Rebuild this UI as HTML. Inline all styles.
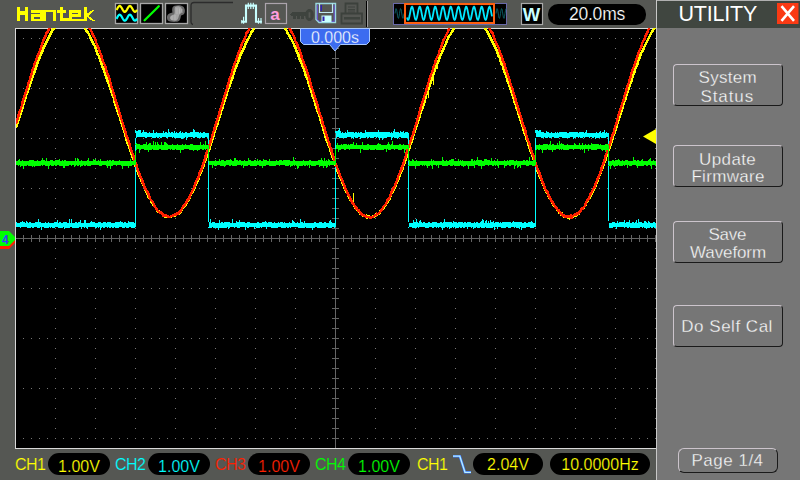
<!DOCTYPE html>
<html><head><meta charset="utf-8"><style>
html,body{margin:0;padding:0}
body{width:800px;height:480px;overflow:hidden;position:relative;background:#555753;font-family:"Liberation Sans",sans-serif}
.a{position:absolute;white-space:nowrap}
.pill{position:absolute;background:#000;border-radius:11px}
.btn{position:absolute;left:673px;width:108px;border-radius:4px;border-top:1px solid #ccc4cc;border-left:1px solid #ccc4cc;border-right:1px solid #1a1a1a;border-bottom:1px solid #1a1a1a}
.bt{position:absolute;color:#fafafa;font-size:17px;line-height:20px;white-space:pre;-webkit-text-stroke:0.3px #767676}
</style></head><body>
<svg width="800" height="480" style="position:absolute;left:0;top:0">
<defs><clipPath id="sc"><rect x="16" y="28" width="640" height="420"/></clipPath></defs>
<rect x="15" y="28" width="641" height="421" fill="#d8d8d8"/>
<rect x="16" y="29" width="640" height="419" fill="#000"/>
<rect x="656" y="0" width="1" height="480" fill="#c8c8c8"/>
<g shape-rendering="crispEdges">
<path d="M23 38h1v1h-1zM31 38h1v1h-1zM39 38h1v1h-1zM47 38h1v1h-1zM55 38h1v1h-1zM63 38h1v1h-1zM71 38h1v1h-1zM79 38h1v1h-1zM87 38h1v1h-1zM95 38h1v1h-1zM103 38h1v1h-1zM111 38h1v1h-1zM119 38h1v1h-1zM127 38h1v1h-1zM135 38h1v1h-1zM143 38h1v1h-1zM151 38h1v1h-1zM159 38h1v1h-1zM167 38h1v1h-1zM175 38h1v1h-1zM183 38h1v1h-1zM191 38h1v1h-1zM199 38h1v1h-1zM207 38h1v1h-1zM215 38h1v1h-1zM223 38h1v1h-1zM231 38h1v1h-1zM239 38h1v1h-1zM247 38h1v1h-1zM255 38h1v1h-1zM263 38h1v1h-1zM271 38h1v1h-1zM279 38h1v1h-1zM287 38h1v1h-1zM295 38h1v1h-1zM303 38h1v1h-1zM311 38h1v1h-1zM319 38h1v1h-1zM327 38h1v1h-1zM335 38h1v1h-1zM343 38h1v1h-1zM351 38h1v1h-1zM359 38h1v1h-1zM367 38h1v1h-1zM375 38h1v1h-1zM383 38h1v1h-1zM391 38h1v1h-1zM399 38h1v1h-1zM407 38h1v1h-1zM415 38h1v1h-1zM423 38h1v1h-1zM431 38h1v1h-1zM439 38h1v1h-1zM447 38h1v1h-1zM455 38h1v1h-1zM463 38h1v1h-1zM471 38h1v1h-1zM479 38h1v1h-1zM487 38h1v1h-1zM495 38h1v1h-1zM503 38h1v1h-1zM511 38h1v1h-1zM519 38h1v1h-1zM527 38h1v1h-1zM535 38h1v1h-1zM543 38h1v1h-1zM551 38h1v1h-1zM559 38h1v1h-1zM567 38h1v1h-1zM575 38h1v1h-1zM583 38h1v1h-1zM591 38h1v1h-1zM599 38h1v1h-1zM607 38h1v1h-1zM615 38h1v1h-1zM623 38h1v1h-1zM631 38h1v1h-1zM639 38h1v1h-1zM647 38h1v1h-1zM655 38h1v1h-1zM23 88h1v1h-1zM31 88h1v1h-1zM39 88h1v1h-1zM47 88h1v1h-1zM55 88h1v1h-1zM63 88h1v1h-1zM71 88h1v1h-1zM79 88h1v1h-1zM87 88h1v1h-1zM95 88h1v1h-1zM103 88h1v1h-1zM111 88h1v1h-1zM119 88h1v1h-1zM127 88h1v1h-1zM135 88h1v1h-1zM143 88h1v1h-1zM151 88h1v1h-1zM159 88h1v1h-1zM167 88h1v1h-1zM175 88h1v1h-1zM183 88h1v1h-1zM191 88h1v1h-1zM199 88h1v1h-1zM207 88h1v1h-1zM215 88h1v1h-1zM223 88h1v1h-1zM231 88h1v1h-1zM239 88h1v1h-1zM247 88h1v1h-1zM255 88h1v1h-1zM263 88h1v1h-1zM271 88h1v1h-1zM279 88h1v1h-1zM287 88h1v1h-1zM295 88h1v1h-1zM303 88h1v1h-1zM311 88h1v1h-1zM319 88h1v1h-1zM327 88h1v1h-1zM335 88h1v1h-1zM343 88h1v1h-1zM351 88h1v1h-1zM359 88h1v1h-1zM367 88h1v1h-1zM375 88h1v1h-1zM383 88h1v1h-1zM391 88h1v1h-1zM399 88h1v1h-1zM407 88h1v1h-1zM415 88h1v1h-1zM423 88h1v1h-1zM431 88h1v1h-1zM439 88h1v1h-1zM447 88h1v1h-1zM455 88h1v1h-1zM463 88h1v1h-1zM471 88h1v1h-1zM479 88h1v1h-1zM487 88h1v1h-1zM495 88h1v1h-1zM503 88h1v1h-1zM511 88h1v1h-1zM519 88h1v1h-1zM527 88h1v1h-1zM535 88h1v1h-1zM543 88h1v1h-1zM551 88h1v1h-1zM559 88h1v1h-1zM567 88h1v1h-1zM575 88h1v1h-1zM583 88h1v1h-1zM591 88h1v1h-1zM599 88h1v1h-1zM607 88h1v1h-1zM615 88h1v1h-1zM623 88h1v1h-1zM631 88h1v1h-1zM639 88h1v1h-1zM647 88h1v1h-1zM655 88h1v1h-1zM23 138h1v1h-1zM31 138h1v1h-1zM39 138h1v1h-1zM47 138h1v1h-1zM55 138h1v1h-1zM63 138h1v1h-1zM71 138h1v1h-1zM79 138h1v1h-1zM87 138h1v1h-1zM95 138h1v1h-1zM103 138h1v1h-1zM111 138h1v1h-1zM119 138h1v1h-1zM127 138h1v1h-1zM135 138h1v1h-1zM143 138h1v1h-1zM151 138h1v1h-1zM159 138h1v1h-1zM167 138h1v1h-1zM175 138h1v1h-1zM183 138h1v1h-1zM191 138h1v1h-1zM199 138h1v1h-1zM207 138h1v1h-1zM215 138h1v1h-1zM223 138h1v1h-1zM231 138h1v1h-1zM239 138h1v1h-1zM247 138h1v1h-1zM255 138h1v1h-1zM263 138h1v1h-1zM271 138h1v1h-1zM279 138h1v1h-1zM287 138h1v1h-1zM295 138h1v1h-1zM303 138h1v1h-1zM311 138h1v1h-1zM319 138h1v1h-1zM327 138h1v1h-1zM335 138h1v1h-1zM343 138h1v1h-1zM351 138h1v1h-1zM359 138h1v1h-1zM367 138h1v1h-1zM375 138h1v1h-1zM383 138h1v1h-1zM391 138h1v1h-1zM399 138h1v1h-1zM407 138h1v1h-1zM415 138h1v1h-1zM423 138h1v1h-1zM431 138h1v1h-1zM439 138h1v1h-1zM447 138h1v1h-1zM455 138h1v1h-1zM463 138h1v1h-1zM471 138h1v1h-1zM479 138h1v1h-1zM487 138h1v1h-1zM495 138h1v1h-1zM503 138h1v1h-1zM511 138h1v1h-1zM519 138h1v1h-1zM527 138h1v1h-1zM535 138h1v1h-1zM543 138h1v1h-1zM551 138h1v1h-1zM559 138h1v1h-1zM567 138h1v1h-1zM575 138h1v1h-1zM583 138h1v1h-1zM591 138h1v1h-1zM599 138h1v1h-1zM607 138h1v1h-1zM615 138h1v1h-1zM623 138h1v1h-1zM631 138h1v1h-1zM639 138h1v1h-1zM647 138h1v1h-1zM655 138h1v1h-1zM23 188h1v1h-1zM31 188h1v1h-1zM39 188h1v1h-1zM47 188h1v1h-1zM55 188h1v1h-1zM63 188h1v1h-1zM71 188h1v1h-1zM79 188h1v1h-1zM87 188h1v1h-1zM95 188h1v1h-1zM103 188h1v1h-1zM111 188h1v1h-1zM119 188h1v1h-1zM127 188h1v1h-1zM135 188h1v1h-1zM143 188h1v1h-1zM151 188h1v1h-1zM159 188h1v1h-1zM167 188h1v1h-1zM175 188h1v1h-1zM183 188h1v1h-1zM191 188h1v1h-1zM199 188h1v1h-1zM207 188h1v1h-1zM215 188h1v1h-1zM223 188h1v1h-1zM231 188h1v1h-1zM239 188h1v1h-1zM247 188h1v1h-1zM255 188h1v1h-1zM263 188h1v1h-1zM271 188h1v1h-1zM279 188h1v1h-1zM287 188h1v1h-1zM295 188h1v1h-1zM303 188h1v1h-1zM311 188h1v1h-1zM319 188h1v1h-1zM327 188h1v1h-1zM335 188h1v1h-1zM343 188h1v1h-1zM351 188h1v1h-1zM359 188h1v1h-1zM367 188h1v1h-1zM375 188h1v1h-1zM383 188h1v1h-1zM391 188h1v1h-1zM399 188h1v1h-1zM407 188h1v1h-1zM415 188h1v1h-1zM423 188h1v1h-1zM431 188h1v1h-1zM439 188h1v1h-1zM447 188h1v1h-1zM455 188h1v1h-1zM463 188h1v1h-1zM471 188h1v1h-1zM479 188h1v1h-1zM487 188h1v1h-1zM495 188h1v1h-1zM503 188h1v1h-1zM511 188h1v1h-1zM519 188h1v1h-1zM527 188h1v1h-1zM535 188h1v1h-1zM543 188h1v1h-1zM551 188h1v1h-1zM559 188h1v1h-1zM567 188h1v1h-1zM575 188h1v1h-1zM583 188h1v1h-1zM591 188h1v1h-1zM599 188h1v1h-1zM607 188h1v1h-1zM615 188h1v1h-1zM623 188h1v1h-1zM631 188h1v1h-1zM639 188h1v1h-1zM647 188h1v1h-1zM655 188h1v1h-1zM23 288h1v1h-1zM31 288h1v1h-1zM39 288h1v1h-1zM47 288h1v1h-1zM55 288h1v1h-1zM63 288h1v1h-1zM71 288h1v1h-1zM79 288h1v1h-1zM87 288h1v1h-1zM95 288h1v1h-1zM103 288h1v1h-1zM111 288h1v1h-1zM119 288h1v1h-1zM127 288h1v1h-1zM135 288h1v1h-1zM143 288h1v1h-1zM151 288h1v1h-1zM159 288h1v1h-1zM167 288h1v1h-1zM175 288h1v1h-1zM183 288h1v1h-1zM191 288h1v1h-1zM199 288h1v1h-1zM207 288h1v1h-1zM215 288h1v1h-1zM223 288h1v1h-1zM231 288h1v1h-1zM239 288h1v1h-1zM247 288h1v1h-1zM255 288h1v1h-1zM263 288h1v1h-1zM271 288h1v1h-1zM279 288h1v1h-1zM287 288h1v1h-1zM295 288h1v1h-1zM303 288h1v1h-1zM311 288h1v1h-1zM319 288h1v1h-1zM327 288h1v1h-1zM335 288h1v1h-1zM343 288h1v1h-1zM351 288h1v1h-1zM359 288h1v1h-1zM367 288h1v1h-1zM375 288h1v1h-1zM383 288h1v1h-1zM391 288h1v1h-1zM399 288h1v1h-1zM407 288h1v1h-1zM415 288h1v1h-1zM423 288h1v1h-1zM431 288h1v1h-1zM439 288h1v1h-1zM447 288h1v1h-1zM455 288h1v1h-1zM463 288h1v1h-1zM471 288h1v1h-1zM479 288h1v1h-1zM487 288h1v1h-1zM495 288h1v1h-1zM503 288h1v1h-1zM511 288h1v1h-1zM519 288h1v1h-1zM527 288h1v1h-1zM535 288h1v1h-1zM543 288h1v1h-1zM551 288h1v1h-1zM559 288h1v1h-1zM567 288h1v1h-1zM575 288h1v1h-1zM583 288h1v1h-1zM591 288h1v1h-1zM599 288h1v1h-1zM607 288h1v1h-1zM615 288h1v1h-1zM623 288h1v1h-1zM631 288h1v1h-1zM639 288h1v1h-1zM647 288h1v1h-1zM655 288h1v1h-1zM23 338h1v1h-1zM31 338h1v1h-1zM39 338h1v1h-1zM47 338h1v1h-1zM55 338h1v1h-1zM63 338h1v1h-1zM71 338h1v1h-1zM79 338h1v1h-1zM87 338h1v1h-1zM95 338h1v1h-1zM103 338h1v1h-1zM111 338h1v1h-1zM119 338h1v1h-1zM127 338h1v1h-1zM135 338h1v1h-1zM143 338h1v1h-1zM151 338h1v1h-1zM159 338h1v1h-1zM167 338h1v1h-1zM175 338h1v1h-1zM183 338h1v1h-1zM191 338h1v1h-1zM199 338h1v1h-1zM207 338h1v1h-1zM215 338h1v1h-1zM223 338h1v1h-1zM231 338h1v1h-1zM239 338h1v1h-1zM247 338h1v1h-1zM255 338h1v1h-1zM263 338h1v1h-1zM271 338h1v1h-1zM279 338h1v1h-1zM287 338h1v1h-1zM295 338h1v1h-1zM303 338h1v1h-1zM311 338h1v1h-1zM319 338h1v1h-1zM327 338h1v1h-1zM335 338h1v1h-1zM343 338h1v1h-1zM351 338h1v1h-1zM359 338h1v1h-1zM367 338h1v1h-1zM375 338h1v1h-1zM383 338h1v1h-1zM391 338h1v1h-1zM399 338h1v1h-1zM407 338h1v1h-1zM415 338h1v1h-1zM423 338h1v1h-1zM431 338h1v1h-1zM439 338h1v1h-1zM447 338h1v1h-1zM455 338h1v1h-1zM463 338h1v1h-1zM471 338h1v1h-1zM479 338h1v1h-1zM487 338h1v1h-1zM495 338h1v1h-1zM503 338h1v1h-1zM511 338h1v1h-1zM519 338h1v1h-1zM527 338h1v1h-1zM535 338h1v1h-1zM543 338h1v1h-1zM551 338h1v1h-1zM559 338h1v1h-1zM567 338h1v1h-1zM575 338h1v1h-1zM583 338h1v1h-1zM591 338h1v1h-1zM599 338h1v1h-1zM607 338h1v1h-1zM615 338h1v1h-1zM623 338h1v1h-1zM631 338h1v1h-1zM639 338h1v1h-1zM647 338h1v1h-1zM655 338h1v1h-1zM23 388h1v1h-1zM31 388h1v1h-1zM39 388h1v1h-1zM47 388h1v1h-1zM55 388h1v1h-1zM63 388h1v1h-1zM71 388h1v1h-1zM79 388h1v1h-1zM87 388h1v1h-1zM95 388h1v1h-1zM103 388h1v1h-1zM111 388h1v1h-1zM119 388h1v1h-1zM127 388h1v1h-1zM135 388h1v1h-1zM143 388h1v1h-1zM151 388h1v1h-1zM159 388h1v1h-1zM167 388h1v1h-1zM175 388h1v1h-1zM183 388h1v1h-1zM191 388h1v1h-1zM199 388h1v1h-1zM207 388h1v1h-1zM215 388h1v1h-1zM223 388h1v1h-1zM231 388h1v1h-1zM239 388h1v1h-1zM247 388h1v1h-1zM255 388h1v1h-1zM263 388h1v1h-1zM271 388h1v1h-1zM279 388h1v1h-1zM287 388h1v1h-1zM295 388h1v1h-1zM303 388h1v1h-1zM311 388h1v1h-1zM319 388h1v1h-1zM327 388h1v1h-1zM335 388h1v1h-1zM343 388h1v1h-1zM351 388h1v1h-1zM359 388h1v1h-1zM367 388h1v1h-1zM375 388h1v1h-1zM383 388h1v1h-1zM391 388h1v1h-1zM399 388h1v1h-1zM407 388h1v1h-1zM415 388h1v1h-1zM423 388h1v1h-1zM431 388h1v1h-1zM439 388h1v1h-1zM447 388h1v1h-1zM455 388h1v1h-1zM463 388h1v1h-1zM471 388h1v1h-1zM479 388h1v1h-1zM487 388h1v1h-1zM495 388h1v1h-1zM503 388h1v1h-1zM511 388h1v1h-1zM519 388h1v1h-1zM527 388h1v1h-1zM535 388h1v1h-1zM543 388h1v1h-1zM551 388h1v1h-1zM559 388h1v1h-1zM567 388h1v1h-1zM575 388h1v1h-1zM583 388h1v1h-1zM591 388h1v1h-1zM599 388h1v1h-1zM607 388h1v1h-1zM615 388h1v1h-1zM623 388h1v1h-1zM631 388h1v1h-1zM639 388h1v1h-1zM647 388h1v1h-1zM655 388h1v1h-1zM23 438h1v1h-1zM31 438h1v1h-1zM39 438h1v1h-1zM47 438h1v1h-1zM55 438h1v1h-1zM63 438h1v1h-1zM71 438h1v1h-1zM79 438h1v1h-1zM87 438h1v1h-1zM95 438h1v1h-1zM103 438h1v1h-1zM111 438h1v1h-1zM119 438h1v1h-1zM127 438h1v1h-1zM135 438h1v1h-1zM143 438h1v1h-1zM151 438h1v1h-1zM159 438h1v1h-1zM167 438h1v1h-1zM175 438h1v1h-1zM183 438h1v1h-1zM191 438h1v1h-1zM199 438h1v1h-1zM207 438h1v1h-1zM215 438h1v1h-1zM223 438h1v1h-1zM231 438h1v1h-1zM239 438h1v1h-1zM247 438h1v1h-1zM255 438h1v1h-1zM263 438h1v1h-1zM271 438h1v1h-1zM279 438h1v1h-1zM287 438h1v1h-1zM295 438h1v1h-1zM303 438h1v1h-1zM311 438h1v1h-1zM319 438h1v1h-1zM327 438h1v1h-1zM335 438h1v1h-1zM343 438h1v1h-1zM351 438h1v1h-1zM359 438h1v1h-1zM367 438h1v1h-1zM375 438h1v1h-1zM383 438h1v1h-1zM391 438h1v1h-1zM399 438h1v1h-1zM407 438h1v1h-1zM415 438h1v1h-1zM423 438h1v1h-1zM431 438h1v1h-1zM439 438h1v1h-1zM447 438h1v1h-1zM455 438h1v1h-1zM463 438h1v1h-1zM471 438h1v1h-1zM479 438h1v1h-1zM487 438h1v1h-1zM495 438h1v1h-1zM503 438h1v1h-1zM511 438h1v1h-1zM519 438h1v1h-1zM527 438h1v1h-1zM535 438h1v1h-1zM543 438h1v1h-1zM551 438h1v1h-1zM559 438h1v1h-1zM567 438h1v1h-1zM575 438h1v1h-1zM583 438h1v1h-1zM591 438h1v1h-1zM599 438h1v1h-1zM607 438h1v1h-1zM615 438h1v1h-1zM623 438h1v1h-1zM631 438h1v1h-1zM639 438h1v1h-1zM647 438h1v1h-1zM655 438h1v1h-1zM55 48h1v1h-1zM55 58h1v1h-1zM55 68h1v1h-1zM55 78h1v1h-1zM55 98h1v1h-1zM55 108h1v1h-1zM55 118h1v1h-1zM55 128h1v1h-1zM55 148h1v1h-1zM55 158h1v1h-1zM55 168h1v1h-1zM55 178h1v1h-1zM55 198h1v1h-1zM55 208h1v1h-1zM55 218h1v1h-1zM55 228h1v1h-1zM55 248h1v1h-1zM55 258h1v1h-1zM55 268h1v1h-1zM55 278h1v1h-1zM55 298h1v1h-1zM55 308h1v1h-1zM55 318h1v1h-1zM55 328h1v1h-1zM55 348h1v1h-1zM55 358h1v1h-1zM55 368h1v1h-1zM55 378h1v1h-1zM55 398h1v1h-1zM55 408h1v1h-1zM55 418h1v1h-1zM55 428h1v1h-1zM95 48h1v1h-1zM95 58h1v1h-1zM95 68h1v1h-1zM95 78h1v1h-1zM95 98h1v1h-1zM95 108h1v1h-1zM95 118h1v1h-1zM95 128h1v1h-1zM95 148h1v1h-1zM95 158h1v1h-1zM95 168h1v1h-1zM95 178h1v1h-1zM95 198h1v1h-1zM95 208h1v1h-1zM95 218h1v1h-1zM95 228h1v1h-1zM95 248h1v1h-1zM95 258h1v1h-1zM95 268h1v1h-1zM95 278h1v1h-1zM95 298h1v1h-1zM95 308h1v1h-1zM95 318h1v1h-1zM95 328h1v1h-1zM95 348h1v1h-1zM95 358h1v1h-1zM95 368h1v1h-1zM95 378h1v1h-1zM95 398h1v1h-1zM95 408h1v1h-1zM95 418h1v1h-1zM95 428h1v1h-1zM135 48h1v1h-1zM135 58h1v1h-1zM135 68h1v1h-1zM135 78h1v1h-1zM135 98h1v1h-1zM135 108h1v1h-1zM135 118h1v1h-1zM135 128h1v1h-1zM135 148h1v1h-1zM135 158h1v1h-1zM135 168h1v1h-1zM135 178h1v1h-1zM135 198h1v1h-1zM135 208h1v1h-1zM135 218h1v1h-1zM135 228h1v1h-1zM135 248h1v1h-1zM135 258h1v1h-1zM135 268h1v1h-1zM135 278h1v1h-1zM135 298h1v1h-1zM135 308h1v1h-1zM135 318h1v1h-1zM135 328h1v1h-1zM135 348h1v1h-1zM135 358h1v1h-1zM135 368h1v1h-1zM135 378h1v1h-1zM135 398h1v1h-1zM135 408h1v1h-1zM135 418h1v1h-1zM135 428h1v1h-1zM175 48h1v1h-1zM175 58h1v1h-1zM175 68h1v1h-1zM175 78h1v1h-1zM175 98h1v1h-1zM175 108h1v1h-1zM175 118h1v1h-1zM175 128h1v1h-1zM175 148h1v1h-1zM175 158h1v1h-1zM175 168h1v1h-1zM175 178h1v1h-1zM175 198h1v1h-1zM175 208h1v1h-1zM175 218h1v1h-1zM175 228h1v1h-1zM175 248h1v1h-1zM175 258h1v1h-1zM175 268h1v1h-1zM175 278h1v1h-1zM175 298h1v1h-1zM175 308h1v1h-1zM175 318h1v1h-1zM175 328h1v1h-1zM175 348h1v1h-1zM175 358h1v1h-1zM175 368h1v1h-1zM175 378h1v1h-1zM175 398h1v1h-1zM175 408h1v1h-1zM175 418h1v1h-1zM175 428h1v1h-1zM215 48h1v1h-1zM215 58h1v1h-1zM215 68h1v1h-1zM215 78h1v1h-1zM215 98h1v1h-1zM215 108h1v1h-1zM215 118h1v1h-1zM215 128h1v1h-1zM215 148h1v1h-1zM215 158h1v1h-1zM215 168h1v1h-1zM215 178h1v1h-1zM215 198h1v1h-1zM215 208h1v1h-1zM215 218h1v1h-1zM215 228h1v1h-1zM215 248h1v1h-1zM215 258h1v1h-1zM215 268h1v1h-1zM215 278h1v1h-1zM215 298h1v1h-1zM215 308h1v1h-1zM215 318h1v1h-1zM215 328h1v1h-1zM215 348h1v1h-1zM215 358h1v1h-1zM215 368h1v1h-1zM215 378h1v1h-1zM215 398h1v1h-1zM215 408h1v1h-1zM215 418h1v1h-1zM215 428h1v1h-1zM255 48h1v1h-1zM255 58h1v1h-1zM255 68h1v1h-1zM255 78h1v1h-1zM255 98h1v1h-1zM255 108h1v1h-1zM255 118h1v1h-1zM255 128h1v1h-1zM255 148h1v1h-1zM255 158h1v1h-1zM255 168h1v1h-1zM255 178h1v1h-1zM255 198h1v1h-1zM255 208h1v1h-1zM255 218h1v1h-1zM255 228h1v1h-1zM255 248h1v1h-1zM255 258h1v1h-1zM255 268h1v1h-1zM255 278h1v1h-1zM255 298h1v1h-1zM255 308h1v1h-1zM255 318h1v1h-1zM255 328h1v1h-1zM255 348h1v1h-1zM255 358h1v1h-1zM255 368h1v1h-1zM255 378h1v1h-1zM255 398h1v1h-1zM255 408h1v1h-1zM255 418h1v1h-1zM255 428h1v1h-1zM295 48h1v1h-1zM295 58h1v1h-1zM295 68h1v1h-1zM295 78h1v1h-1zM295 98h1v1h-1zM295 108h1v1h-1zM295 118h1v1h-1zM295 128h1v1h-1zM295 148h1v1h-1zM295 158h1v1h-1zM295 168h1v1h-1zM295 178h1v1h-1zM295 198h1v1h-1zM295 208h1v1h-1zM295 218h1v1h-1zM295 228h1v1h-1zM295 248h1v1h-1zM295 258h1v1h-1zM295 268h1v1h-1zM295 278h1v1h-1zM295 298h1v1h-1zM295 308h1v1h-1zM295 318h1v1h-1zM295 328h1v1h-1zM295 348h1v1h-1zM295 358h1v1h-1zM295 368h1v1h-1zM295 378h1v1h-1zM295 398h1v1h-1zM295 408h1v1h-1zM295 418h1v1h-1zM295 428h1v1h-1zM375 48h1v1h-1zM375 58h1v1h-1zM375 68h1v1h-1zM375 78h1v1h-1zM375 98h1v1h-1zM375 108h1v1h-1zM375 118h1v1h-1zM375 128h1v1h-1zM375 148h1v1h-1zM375 158h1v1h-1zM375 168h1v1h-1zM375 178h1v1h-1zM375 198h1v1h-1zM375 208h1v1h-1zM375 218h1v1h-1zM375 228h1v1h-1zM375 248h1v1h-1zM375 258h1v1h-1zM375 268h1v1h-1zM375 278h1v1h-1zM375 298h1v1h-1zM375 308h1v1h-1zM375 318h1v1h-1zM375 328h1v1h-1zM375 348h1v1h-1zM375 358h1v1h-1zM375 368h1v1h-1zM375 378h1v1h-1zM375 398h1v1h-1zM375 408h1v1h-1zM375 418h1v1h-1zM375 428h1v1h-1zM415 48h1v1h-1zM415 58h1v1h-1zM415 68h1v1h-1zM415 78h1v1h-1zM415 98h1v1h-1zM415 108h1v1h-1zM415 118h1v1h-1zM415 128h1v1h-1zM415 148h1v1h-1zM415 158h1v1h-1zM415 168h1v1h-1zM415 178h1v1h-1zM415 198h1v1h-1zM415 208h1v1h-1zM415 218h1v1h-1zM415 228h1v1h-1zM415 248h1v1h-1zM415 258h1v1h-1zM415 268h1v1h-1zM415 278h1v1h-1zM415 298h1v1h-1zM415 308h1v1h-1zM415 318h1v1h-1zM415 328h1v1h-1zM415 348h1v1h-1zM415 358h1v1h-1zM415 368h1v1h-1zM415 378h1v1h-1zM415 398h1v1h-1zM415 408h1v1h-1zM415 418h1v1h-1zM415 428h1v1h-1zM455 48h1v1h-1zM455 58h1v1h-1zM455 68h1v1h-1zM455 78h1v1h-1zM455 98h1v1h-1zM455 108h1v1h-1zM455 118h1v1h-1zM455 128h1v1h-1zM455 148h1v1h-1zM455 158h1v1h-1zM455 168h1v1h-1zM455 178h1v1h-1zM455 198h1v1h-1zM455 208h1v1h-1zM455 218h1v1h-1zM455 228h1v1h-1zM455 248h1v1h-1zM455 258h1v1h-1zM455 268h1v1h-1zM455 278h1v1h-1zM455 298h1v1h-1zM455 308h1v1h-1zM455 318h1v1h-1zM455 328h1v1h-1zM455 348h1v1h-1zM455 358h1v1h-1zM455 368h1v1h-1zM455 378h1v1h-1zM455 398h1v1h-1zM455 408h1v1h-1zM455 418h1v1h-1zM455 428h1v1h-1zM495 48h1v1h-1zM495 58h1v1h-1zM495 68h1v1h-1zM495 78h1v1h-1zM495 98h1v1h-1zM495 108h1v1h-1zM495 118h1v1h-1zM495 128h1v1h-1zM495 148h1v1h-1zM495 158h1v1h-1zM495 168h1v1h-1zM495 178h1v1h-1zM495 198h1v1h-1zM495 208h1v1h-1zM495 218h1v1h-1zM495 228h1v1h-1zM495 248h1v1h-1zM495 258h1v1h-1zM495 268h1v1h-1zM495 278h1v1h-1zM495 298h1v1h-1zM495 308h1v1h-1zM495 318h1v1h-1zM495 328h1v1h-1zM495 348h1v1h-1zM495 358h1v1h-1zM495 368h1v1h-1zM495 378h1v1h-1zM495 398h1v1h-1zM495 408h1v1h-1zM495 418h1v1h-1zM495 428h1v1h-1zM535 48h1v1h-1zM535 58h1v1h-1zM535 68h1v1h-1zM535 78h1v1h-1zM535 98h1v1h-1zM535 108h1v1h-1zM535 118h1v1h-1zM535 128h1v1h-1zM535 148h1v1h-1zM535 158h1v1h-1zM535 168h1v1h-1zM535 178h1v1h-1zM535 198h1v1h-1zM535 208h1v1h-1zM535 218h1v1h-1zM535 228h1v1h-1zM535 248h1v1h-1zM535 258h1v1h-1zM535 268h1v1h-1zM535 278h1v1h-1zM535 298h1v1h-1zM535 308h1v1h-1zM535 318h1v1h-1zM535 328h1v1h-1zM535 348h1v1h-1zM535 358h1v1h-1zM535 368h1v1h-1zM535 378h1v1h-1zM535 398h1v1h-1zM535 408h1v1h-1zM535 418h1v1h-1zM535 428h1v1h-1zM575 48h1v1h-1zM575 58h1v1h-1zM575 68h1v1h-1zM575 78h1v1h-1zM575 98h1v1h-1zM575 108h1v1h-1zM575 118h1v1h-1zM575 128h1v1h-1zM575 148h1v1h-1zM575 158h1v1h-1zM575 168h1v1h-1zM575 178h1v1h-1zM575 198h1v1h-1zM575 208h1v1h-1zM575 218h1v1h-1zM575 228h1v1h-1zM575 248h1v1h-1zM575 258h1v1h-1zM575 268h1v1h-1zM575 278h1v1h-1zM575 298h1v1h-1zM575 308h1v1h-1zM575 318h1v1h-1zM575 328h1v1h-1zM575 348h1v1h-1zM575 358h1v1h-1zM575 368h1v1h-1zM575 378h1v1h-1zM575 398h1v1h-1zM575 408h1v1h-1zM575 418h1v1h-1zM575 428h1v1h-1zM615 48h1v1h-1zM615 58h1v1h-1zM615 68h1v1h-1zM615 78h1v1h-1zM615 98h1v1h-1zM615 108h1v1h-1zM615 118h1v1h-1zM615 128h1v1h-1zM615 148h1v1h-1zM615 158h1v1h-1zM615 168h1v1h-1zM615 178h1v1h-1zM615 198h1v1h-1zM615 208h1v1h-1zM615 218h1v1h-1zM615 228h1v1h-1zM615 248h1v1h-1zM615 258h1v1h-1zM615 268h1v1h-1zM615 278h1v1h-1zM615 298h1v1h-1zM615 308h1v1h-1zM615 318h1v1h-1zM615 328h1v1h-1zM615 348h1v1h-1zM615 358h1v1h-1zM615 368h1v1h-1zM615 378h1v1h-1zM615 398h1v1h-1zM615 408h1v1h-1zM615 418h1v1h-1zM615 428h1v1h-1zM655 48h1v1h-1zM655 58h1v1h-1zM655 68h1v1h-1zM655 78h1v1h-1zM655 98h1v1h-1zM655 108h1v1h-1zM655 118h1v1h-1zM655 128h1v1h-1zM655 148h1v1h-1zM655 158h1v1h-1zM655 168h1v1h-1zM655 178h1v1h-1zM655 198h1v1h-1zM655 208h1v1h-1zM655 218h1v1h-1zM655 228h1v1h-1zM655 248h1v1h-1zM655 258h1v1h-1zM655 268h1v1h-1zM655 278h1v1h-1zM655 298h1v1h-1zM655 308h1v1h-1zM655 318h1v1h-1zM655 328h1v1h-1zM655 348h1v1h-1zM655 358h1v1h-1zM655 368h1v1h-1zM655 378h1v1h-1zM655 398h1v1h-1zM655 408h1v1h-1zM655 418h1v1h-1zM655 428h1v1h-1z" fill="#767676"/>
<path d="M16 238h640v1H16z" fill="#646464"/><path d="M335 51h1v397h-1z" fill="#646464"/><path d="M23 235h1v7h-1zM31 235h1v7h-1zM39 235h1v7h-1zM47 235h1v7h-1zM55 235h1v7h-1zM63 235h1v7h-1zM71 235h1v7h-1zM79 235h1v7h-1zM87 235h1v7h-1zM95 235h1v7h-1zM103 235h1v7h-1zM111 235h1v7h-1zM119 235h1v7h-1zM127 235h1v7h-1zM135 235h1v7h-1zM143 235h1v7h-1zM151 235h1v7h-1zM159 235h1v7h-1zM167 235h1v7h-1zM175 235h1v7h-1zM183 235h1v7h-1zM191 235h1v7h-1zM199 235h1v7h-1zM207 235h1v7h-1zM215 235h1v7h-1zM223 235h1v7h-1zM231 235h1v7h-1zM239 235h1v7h-1zM247 235h1v7h-1zM255 235h1v7h-1zM263 235h1v7h-1zM271 235h1v7h-1zM279 235h1v7h-1zM287 235h1v7h-1zM295 235h1v7h-1zM303 235h1v7h-1zM311 235h1v7h-1zM319 235h1v7h-1zM327 235h1v7h-1zM335 235h1v7h-1zM343 235h1v7h-1zM351 235h1v7h-1zM359 235h1v7h-1zM367 235h1v7h-1zM375 235h1v7h-1zM383 235h1v7h-1zM391 235h1v7h-1zM399 235h1v7h-1zM407 235h1v7h-1zM415 235h1v7h-1zM423 235h1v7h-1zM431 235h1v7h-1zM439 235h1v7h-1zM447 235h1v7h-1zM455 235h1v7h-1zM463 235h1v7h-1zM471 235h1v7h-1zM479 235h1v7h-1zM487 235h1v7h-1zM495 235h1v7h-1zM503 235h1v7h-1zM511 235h1v7h-1zM519 235h1v7h-1zM527 235h1v7h-1zM535 235h1v7h-1zM543 235h1v7h-1zM551 235h1v7h-1zM559 235h1v7h-1zM567 235h1v7h-1zM575 235h1v7h-1zM583 235h1v7h-1zM591 235h1v7h-1zM599 235h1v7h-1zM607 235h1v7h-1zM615 235h1v7h-1zM623 235h1v7h-1zM631 235h1v7h-1zM639 235h1v7h-1zM647 235h1v7h-1zM655 235h1v7h-1zM332 48h7v1h-7zM332 58h7v1h-7zM332 68h7v1h-7zM332 78h7v1h-7zM332 88h7v1h-7zM332 98h7v1h-7zM332 108h7v1h-7zM332 118h7v1h-7zM332 128h7v1h-7zM332 138h7v1h-7zM332 148h7v1h-7zM332 158h7v1h-7zM332 168h7v1h-7zM332 178h7v1h-7zM332 188h7v1h-7zM332 198h7v1h-7zM332 208h7v1h-7zM332 218h7v1h-7zM332 228h7v1h-7zM332 238h7v1h-7zM332 248h7v1h-7zM332 258h7v1h-7zM332 268h7v1h-7zM332 278h7v1h-7zM332 288h7v1h-7zM332 298h7v1h-7zM332 308h7v1h-7zM332 318h7v1h-7zM332 328h7v1h-7zM332 338h7v1h-7zM332 348h7v1h-7zM332 358h7v1h-7zM332 368h7v1h-7zM332 378h7v1h-7zM332 388h7v1h-7zM332 398h7v1h-7zM332 408h7v1h-7zM332 418h7v1h-7zM332 428h7v1h-7zM332 438h7v1h-7z" fill="#646464"/>
</g>
<g clip-path="url(#sc)">
<polyline points="16.0,127.4 17.0,125.2 18.0,122.0 19.0,118.5 20.0,114.9 21.0,112.8 22.0,109.7 23.0,106.0 24.0,102.9 25.0,99.3 26.0,95.8 27.0,93.4 28.0,90.7 29.0,86.8 30.0,85.1 31.0,81.1 32.0,78.2 33.0,74.9 34.0,73.8 35.0,70.5 36.0,68.0 37.0,64.9 38.0,61.1 39.0,59.1 40.0,56.8 41.0,53.7 42.0,52.7 43.0,49.3 44.0,46.6 45.0,45.6 46.0,42.2 47.0,41.6 48.0,38.7 49.0,37.0 50.0,34.7 51.0,33.2 52.0,31.0 53.0,29.1 54.0,29.1 55.0,26.5 56.0,26.2 57.0,23.9 58.0,24.1 59.0,22.9 60.0,21.7 61.0,20.8 62.0,19.7 63.0,19.3 64.0,17.6 65.0,17.8 66.0,18.0 67.0,16.6 68.0,17.7 69.0,17.5 70.0,16.6 71.0,16.7 72.0,17.0 73.0,17.2 74.0,18.7 75.0,18.1 76.0,18.0 77.0,18.8 78.0,20.7 79.0,22.1 80.0,22.2 81.0,23.3 82.0,24.5 83.0,26.1 84.0,26.5 85.0,28.6 86.0,30.1 87.0,31.8 88.0,32.7 89.0,34.4 90.0,36.6 91.0,39.6 92.0,40.5 93.0,43.1 94.0,44.7 95.0,46.6 96.0,48.8 97.0,52.5 98.0,54.8 99.0,56.6 100.0,59.7 101.0,62.3 102.0,65.4 103.0,68.2 104.0,69.9 105.0,73.8 106.0,76.6 107.0,78.8 108.0,82.3 109.0,84.5 110.0,87.3 111.0,90.1 112.0,94.3 113.0,96.1 114.0,99.0 115.0,103.4 116.0,106.5 117.0,109.1 118.0,112.9 119.0,114.6 120.0,118.1 121.0,121.3 122.0,124.7 123.0,127.4 124.0,130.3 125.0,133.9 126.0,138.0 127.0,141.3 128.0,143.9 129.0,146.4 130.0,149.0 131.0,153.2 132.0,155.4 133.0,158.6 134.0,160.2 135.0,163.4 136.0,167.3 137.0,169.9 138.0,172.7 139.0,174.8 140.0,177.0 141.0,179.8 142.0,182.7 143.0,184.1 144.0,186.8 145.0,188.6 146.0,191.6 147.0,192.3 148.0,195.5 149.0,197.9 150.0,198.1 151.0,200.9 152.0,202.7 153.0,204.7 154.0,205.7 155.0,206.5 156.0,208.2 157.0,210.4 158.0,211.5 159.0,211.1 160.0,212.0 161.0,212.9 162.0,213.6 163.0,215.0 164.0,215.1 165.0,216.9 166.0,216.9 167.0,216.2 168.0,217.2 169.0,216.9 170.0,217.2 171.0,216.6 172.0,216.3 173.0,216.0 174.0,216.0 175.0,216.1 176.0,215.2 177.0,213.6 178.0,214.0 179.0,213.4 180.0,212.3 181.0,211.3 182.0,208.7 183.0,208.3 184.0,206.2 185.0,206.0 186.0,203.5 187.0,202.8 188.0,200.3 189.0,199.3 190.0,196.8 191.0,194.4 192.0,193.0 193.0,190.8 194.0,189.7 195.0,186.4 196.0,184.4 197.0,182.2 198.0,180.5 199.0,176.4 200.0,174.8 201.0,172.0 202.0,169.8 203.0,167.5 204.0,163.5 205.0,161.4 206.0,158.3 207.0,155.5 208.0,151.6 209.0,150.0 210.0,147.3 211.0,143.2 212.0,140.1 213.0,138.2 214.0,133.5 215.0,130.4 216.0,127.2 217.0,125.4 218.0,122.2 219.0,118.5 220.0,115.6 221.0,111.4 222.0,109.4 223.0,105.9 224.0,102.9 225.0,99.6 226.0,96.5 227.0,93.1 228.0,89.7 229.0,87.4 230.0,84.1 231.0,81.9 232.0,79.2 233.0,76.2 234.0,72.8 235.0,69.6 236.0,67.1 237.0,64.6 238.0,62.2 239.0,60.2 240.0,56.1 241.0,54.3 242.0,51.9 243.0,50.0 244.0,48.0 245.0,45.5 246.0,43.1 247.0,41.3 248.0,39.1 249.0,37.5 250.0,35.4 251.0,33.6 252.0,31.1 253.0,30.7 254.0,28.2 255.0,27.2 256.0,26.3 257.0,25.3 258.0,24.1 259.0,21.3 260.0,20.9 261.0,20.0 262.0,19.4 263.0,18.2 264.0,18.4 265.0,17.0 266.0,17.0 267.0,17.9 268.0,17.3 269.0,16.7 270.0,16.1 271.0,17.7 272.0,17.5 273.0,16.9 274.0,17.5 275.0,18.5 276.0,19.2 277.0,19.1 278.0,21.2 279.0,20.9 280.0,21.8 281.0,23.9 282.0,23.8 283.0,26.0 284.0,26.5 285.0,28.6 286.0,29.6 287.0,31.3 288.0,34.0 289.0,35.0 290.0,36.8 291.0,39.0 292.0,40.4 293.0,42.3 294.0,44.8 295.0,46.9 296.0,49.0 297.0,52.8 298.0,53.5 299.0,57.4 300.0,60.2 301.0,62.4 302.0,63.8 303.0,67.4 304.0,69.3 305.0,73.1 306.0,76.1 307.0,78.2 308.0,80.7 309.0,84.6 310.0,86.8 311.0,90.2 312.0,93.5 313.0,97.4 314.0,99.5 315.0,102.2 316.0,106.5 317.0,109.7 318.0,112.3 319.0,114.6 320.0,118.0 321.0,121.5 322.0,125.0 323.0,127.5 324.0,131.7 325.0,134.8 326.0,138.1 327.0,141.1 328.0,142.6 329.0,146.6 330.0,148.7 331.0,153.1 332.0,155.8 333.0,158.7 334.0,160.5 335.0,163.1 336.0,167.2 337.0,169.5 338.0,172.2 339.0,174.6 340.0,177.7 341.0,179.4 342.0,181.7 343.0,184.2 344.0,186.4 345.0,189.2 346.0,191.8 347.0,192.4 348.0,194.4 349.0,197.1 350.0,199.3 351.0,200.2 352.0,202.0 353.0,203.2 354.0,204.7 355.0,207.0 356.0,208.6 357.0,209.8 358.0,210.1 359.0,211.1 360.0,213.5 361.0,213.7 362.0,214.3 363.0,215.5 364.0,216.1 365.0,216.2 366.0,215.8 367.0,217.5 368.0,216.6 369.0,216.4 370.0,216.9 371.0,217.1 372.0,217.1 373.0,216.0 374.0,216.6 375.0,215.7 376.0,214.5 377.0,215.1 378.0,214.2 379.0,213.5 380.0,212.1 381.0,210.2 382.0,210.1 383.0,209.0 384.0,207.0 385.0,206.3 386.0,204.9 387.0,202.2 388.0,201.5 389.0,199.8 390.0,197.7 391.0,194.3 392.0,192.9 393.0,191.3 394.0,189.1 395.0,187.2 396.0,184.7 397.0,181.5 398.0,180.4 399.0,177.2 400.0,175.3 401.0,171.5 402.0,170.3 403.0,166.7 404.0,164.4 405.0,161.5 406.0,158.9 407.0,155.1 408.0,151.7 409.0,149.3 410.0,145.9 411.0,143.5 412.0,141.0 413.0,137.1 414.0,133.6 415.0,130.3 416.0,127.9 417.0,125.0 418.0,120.9 419.0,118.9 420.0,114.9 421.0,111.6 422.0,109.9 423.0,106.0 424.0,103.6 425.0,99.8 426.0,96.0 427.0,93.1 428.0,90.4 429.0,87.8 430.0,85.0 431.0,82.0 432.0,78.9 433.0,75.3 434.0,72.8 435.0,69.9 436.0,67.3 437.0,64.2 438.0,62.1 439.0,59.3 440.0,56.0 441.0,54.9 442.0,52.1 443.0,50.1 444.0,47.7 445.0,45.5 446.0,43.8 447.0,40.6 448.0,38.6 449.0,36.0 450.0,35.3 451.0,33.4 452.0,31.7 453.0,30.9 454.0,27.9 455.0,26.5 456.0,26.1 457.0,25.0 458.0,23.2 459.0,21.4 460.0,21.0 461.0,20.9 462.0,19.6 463.0,18.8 464.0,18.1 465.0,18.0 466.0,17.6 467.0,17.5 468.0,17.6 469.0,17.3 470.0,16.6 471.0,16.5 472.0,17.6 473.0,17.9 474.0,18.6 475.0,17.7 476.0,19.5 477.0,20.3 478.0,19.6 479.0,20.9 480.0,22.4 481.0,22.6 482.0,25.0 483.0,25.3 484.0,27.3 485.0,28.1 486.0,29.5 487.0,31.0 488.0,33.2 489.0,35.4 490.0,36.4 491.0,39.1 492.0,40.5 493.0,43.2 494.0,44.8 495.0,46.7 496.0,48.9 497.0,51.1 498.0,54.7 499.0,56.7 500.0,58.7 501.0,62.7 502.0,64.9 503.0,66.5 504.0,70.5 505.0,73.1 506.0,75.7 507.0,78.7 508.0,82.4 509.0,84.3 510.0,87.8 511.0,90.8 512.0,93.4 513.0,96.4 514.0,100.2 515.0,103.1 516.0,105.9 517.0,109.2 518.0,111.8 519.0,115.9 520.0,117.7 521.0,122.0 522.0,124.8 523.0,127.5 524.0,131.3 525.0,134.4 526.0,136.6 527.0,140.4 528.0,142.8 529.0,147.0 530.0,149.1 531.0,152.1 532.0,154.8 533.0,157.4 534.0,160.5 535.0,163.3 536.0,166.9 537.0,170.0 538.0,171.5 539.0,173.9 540.0,177.2 541.0,179.0 542.0,181.9 543.0,184.9 544.0,186.2 545.0,189.3 546.0,191.2 547.0,192.4 548.0,194.7 549.0,197.3 550.0,198.3 551.0,200.2 552.0,202.6 553.0,204.6 554.0,205.6 555.0,207.3 556.0,207.4 557.0,209.2 558.0,210.4 559.0,212.5 560.0,212.5 561.0,214.2 562.0,213.6 563.0,215.1 564.0,216.4 565.0,216.7 566.0,216.7 567.0,216.3 568.0,217.9 569.0,216.4 570.0,218.0 571.0,217.6 572.0,217.3 573.0,216.7 574.0,215.6 575.0,215.4 576.0,215.4 577.0,214.7 578.0,213.4 579.0,213.3 580.0,211.0 581.0,210.3 582.0,208.8 583.0,208.0 584.0,207.5 585.0,206.0 586.0,203.4 587.0,202.1 588.0,200.0 589.0,199.3 590.0,197.0 591.0,194.7 592.0,193.0 593.0,191.8 594.0,188.8 595.0,187.1 596.0,184.7 597.0,182.0 598.0,179.8 599.0,176.9 600.0,174.1 601.0,172.0 602.0,169.0 603.0,166.3 604.0,163.3 605.0,161.8 606.0,158.1 607.0,154.8 608.0,151.6 609.0,148.9 610.0,147.1 611.0,143.1 612.0,140.7 613.0,136.8 614.0,134.5 615.0,131.0 616.0,128.4 617.0,124.9 618.0,121.5 619.0,118.2 620.0,115.6 621.0,112.9 622.0,109.5 623.0,106.0 624.0,102.6 625.0,100.5 626.0,97.3 627.0,93.0 628.0,90.9 629.0,88.0 630.0,84.9 631.0,82.4 632.0,79.3 633.0,75.3 634.0,73.8 635.0,69.8 636.0,67.1 637.0,65.5 638.0,61.4 639.0,59.2 640.0,57.1 641.0,53.9 642.0,51.5 643.0,50.1 644.0,47.5 645.0,45.5 646.0,43.4 647.0,41.5 648.0,39.5 649.0,37.5 650.0,35.9 651.0,33.3 652.0,31.9 653.0,30.0 654.0,29.3 655.0,27.3 656.0,25.6" fill="none" stroke="#ffff00" stroke-width="2.5" shape-rendering="crispEdges"/>
<path d="M353 193h1v10h-1z M433 73h1v12h-1z M437 60h1v9h-1z M428 88h1v10h-1z" fill="#ffff00" shape-rendering="crispEdges"/>
<g shape-rendering="crispEdges">
<path d="M16 222h1v5h-1zM17 223h1v4h-1zM18 223h1v4h-1zM19 223h1v4h-1zM20 222h1v6h-1zM21 222h1v5h-1zM22 221h1v6h-1zM23 222h1v5h-1zM24 222h1v5h-1zM25 223h1v4h-1zM26 221h1v6h-1zM27 222h1v6h-1zM28 223h1v5h-1zM29 222h1v6h-1zM30 222h1v6h-1zM31 223h1v4h-1zM32 223h1v5h-1zM33 223h1v5h-1zM34 223h1v4h-1zM35 222h1v5h-1zM36 222h1v5h-1zM37 222h1v6h-1zM38 219h1v9h-1zM39 222h1v6h-1zM40 222h1v5h-1zM41 223h1v7h-1zM42 223h1v4h-1zM43 223h1v4h-1zM44 223h1v5h-1zM45 222h1v6h-1zM46 223h1v5h-1zM47 223h1v5h-1zM48 222h1v6h-1zM49 223h1v4h-1zM50 223h1v5h-1zM51 223h1v4h-1zM52 223h1v5h-1zM53 223h1v5h-1zM54 222h1v6h-1zM55 222h1v5h-1zM56 222h1v5h-1zM57 220h1v7h-1zM58 223h1v5h-1zM59 222h1v6h-1zM60 222h1v6h-1zM61 223h1v5h-1zM62 223h1v5h-1zM63 222h1v5h-1zM64 222h1v7h-1zM65 222h1v6h-1zM66 222h1v6h-1zM67 223h1v5h-1zM68 223h1v5h-1zM69 219h1v9h-1zM70 223h1v4h-1zM71 219h1v8h-1zM72 223h1v5h-1zM73 223h1v5h-1zM74 223h1v5h-1zM75 222h1v6h-1zM76 222h1v6h-1zM77 223h1v5h-1zM78 222h1v6h-1zM79 222h1v5h-1zM80 220h1v7h-1zM81 223h1v6h-1zM82 223h1v4h-1zM83 223h1v4h-1zM84 220h1v8h-1zM85 220h1v7h-1zM86 223h1v5h-1zM87 223h1v6h-1zM88 223h1v4h-1zM89 223h1v4h-1zM90 222h1v5h-1zM91 221h1v6h-1zM92 222h1v5h-1zM93 222h1v5h-1zM94 222h1v5h-1zM95 223h1v5h-1zM96 223h1v5h-1zM97 223h1v4h-1zM98 222h1v6h-1zM99 222h1v5h-1zM100 222h1v8h-1zM101 223h1v5h-1zM102 223h1v4h-1zM103 222h1v6h-1zM104 222h1v6h-1zM105 222h1v5h-1zM106 223h1v4h-1zM107 222h1v6h-1zM108 222h1v5h-1zM109 222h1v6h-1zM110 222h1v6h-1zM111 223h1v4h-1zM112 223h1v5h-1zM113 223h1v5h-1zM114 223h1v4h-1zM115 222h1v6h-1zM116 222h1v6h-1zM117 222h1v6h-1zM118 222h1v6h-1zM119 222h1v5h-1zM120 221h1v6h-1zM121 222h1v5h-1zM122 222h1v6h-1zM123 223h1v5h-1zM124 222h1v6h-1zM125 222h1v5h-1zM126 223h1v5h-1zM127 223h1v5h-1zM128 221h1v7h-1zM129 222h1v5h-1zM130 222h1v5h-1zM131 222h1v6h-1zM132 222h1v6h-1zM133 222h1v6h-1zM134 223h1v5h-1zM135 130h1v8h-1zM136 131h1v7h-1zM137 131h1v6h-1zM138 130h1v7h-1zM139 130h1v7h-1zM140 130h1v7h-1zM141 133h1v4h-1zM142 132h1v5h-1zM143 130h1v7h-1zM144 132h1v5h-1zM145 132h1v6h-1zM146 132h1v6h-1zM147 133h1v4h-1zM148 133h1v4h-1zM149 132h1v5h-1zM150 133h1v4h-1zM151 133h1v4h-1zM152 133h1v5h-1zM153 130h1v8h-1zM154 133h1v5h-1zM155 133h1v5h-1zM156 132h1v5h-1zM157 133h1v5h-1zM158 133h1v5h-1zM159 133h1v4h-1zM160 133h1v5h-1zM161 133h1v5h-1zM162 133h1v4h-1zM163 131h1v6h-1zM164 133h1v4h-1zM165 132h1v5h-1zM166 132h1v6h-1zM167 133h1v5h-1zM168 129h1v8h-1zM169 132h1v5h-1zM170 133h1v4h-1zM171 132h1v5h-1zM172 132h1v6h-1zM173 133h1v4h-1zM174 131h1v7h-1zM175 133h1v5h-1zM176 132h1v6h-1zM177 133h1v5h-1zM178 133h1v5h-1zM179 132h1v6h-1zM180 131h1v7h-1zM181 133h1v6h-1zM182 132h1v7h-1zM183 133h1v5h-1zM184 133h1v5h-1zM185 132h1v5h-1zM186 132h1v8h-1zM187 133h1v5h-1zM188 133h1v4h-1zM189 133h1v4h-1zM190 132h1v5h-1zM191 132h1v5h-1zM192 132h1v5h-1zM193 129h1v9h-1zM194 130h1v8h-1zM195 132h1v5h-1zM196 132h1v5h-1zM197 132h1v6h-1zM198 132h1v6h-1zM199 133h1v5h-1zM200 132h1v6h-1zM201 133h1v4h-1zM202 133h1v5h-1zM203 132h1v6h-1zM204 132h1v6h-1zM205 133h1v4h-1zM206 133h1v4h-1zM207 133h1v5h-1zM208 222h1v6h-1zM209 222h1v6h-1zM210 219h1v9h-1zM211 223h1v5h-1zM212 222h1v5h-1zM213 222h1v6h-1zM214 222h1v6h-1zM215 223h1v5h-1zM216 223h1v5h-1zM217 223h1v5h-1zM218 223h1v7h-1zM219 220h1v8h-1zM220 223h1v5h-1zM221 222h1v6h-1zM222 222h1v6h-1zM223 223h1v5h-1zM224 222h1v6h-1zM225 222h1v6h-1zM226 222h1v6h-1zM227 222h1v5h-1zM228 222h1v7h-1zM229 222h1v6h-1zM230 223h1v4h-1zM231 223h1v4h-1zM232 219h1v8h-1zM233 223h1v4h-1zM234 223h1v5h-1zM235 223h1v4h-1zM236 221h1v6h-1zM237 222h1v6h-1zM238 222h1v6h-1zM239 220h1v8h-1zM240 222h1v5h-1zM241 222h1v5h-1zM242 222h1v5h-1zM243 222h1v5h-1zM244 222h1v5h-1zM245 223h1v7h-1zM246 223h1v4h-1zM247 222h1v6h-1zM248 222h1v6h-1zM249 222h1v5h-1zM250 223h1v4h-1zM251 223h1v4h-1zM252 223h1v4h-1zM253 223h1v4h-1zM254 223h1v6h-1zM255 223h1v4h-1zM256 223h1v5h-1zM257 222h1v6h-1zM258 222h1v6h-1zM259 223h1v5h-1zM260 223h1v4h-1zM261 223h1v5h-1zM262 222h1v5h-1zM263 222h1v5h-1zM264 222h1v5h-1zM265 221h1v6h-1zM266 222h1v7h-1zM267 223h1v4h-1zM268 222h1v5h-1zM269 222h1v5h-1zM270 222h1v5h-1zM271 222h1v6h-1zM272 223h1v5h-1zM273 223h1v5h-1zM274 222h1v6h-1zM275 223h1v5h-1zM276 223h1v5h-1zM277 223h1v5h-1zM278 222h1v5h-1zM279 223h1v4h-1zM280 222h1v5h-1zM281 222h1v6h-1zM282 222h1v6h-1zM283 223h1v5h-1zM284 222h1v6h-1zM285 223h1v5h-1zM286 223h1v4h-1zM287 223h1v5h-1zM288 223h1v5h-1zM289 222h1v5h-1zM290 223h1v5h-1zM291 223h1v4h-1zM292 220h1v7h-1zM293 221h1v6h-1zM294 222h1v5h-1zM295 223h1v4h-1zM296 223h1v4h-1zM297 222h1v5h-1zM298 223h1v5h-1zM299 223h1v5h-1zM300 219h1v9h-1zM301 222h1v6h-1zM302 222h1v6h-1zM303 223h1v5h-1zM304 221h1v7h-1zM305 223h1v4h-1zM306 223h1v5h-1zM307 223h1v5h-1zM308 223h1v5h-1zM309 223h1v5h-1zM310 223h1v5h-1zM311 223h1v5h-1zM312 223h1v7h-1zM313 223h1v5h-1zM314 222h1v6h-1zM315 222h1v5h-1zM316 223h1v4h-1zM317 223h1v5h-1zM318 223h1v5h-1zM319 222h1v6h-1zM320 222h1v6h-1zM321 222h1v6h-1zM322 223h1v5h-1zM323 223h1v5h-1zM324 222h1v6h-1zM325 222h1v6h-1zM326 223h1v4h-1zM327 223h1v4h-1zM328 223h1v5h-1zM329 221h1v7h-1zM330 220h1v8h-1zM331 222h1v6h-1zM332 223h1v4h-1zM333 223h1v4h-1zM334 223h1v5h-1zM335 131h1v7h-1zM336 131h1v7h-1zM337 131h1v6h-1zM338 130h1v7h-1zM339 128h1v10h-1zM340 131h1v7h-1zM341 133h1v5h-1zM342 132h1v6h-1zM343 133h1v5h-1zM344 133h1v5h-1zM345 132h1v6h-1zM346 133h1v5h-1zM347 130h1v7h-1zM348 132h1v5h-1zM349 132h1v5h-1zM350 132h1v5h-1zM351 132h1v6h-1zM352 132h1v6h-1zM353 132h1v7h-1zM354 133h1v4h-1zM355 132h1v6h-1zM356 132h1v6h-1zM357 133h1v5h-1zM358 132h1v5h-1zM359 133h1v4h-1zM360 132h1v7h-1zM361 132h1v6h-1zM362 133h1v5h-1zM363 133h1v5h-1zM364 133h1v5h-1zM365 130h1v8h-1zM366 132h1v5h-1zM367 132h1v6h-1zM368 132h1v6h-1zM369 132h1v5h-1zM370 132h1v6h-1zM371 132h1v6h-1zM372 132h1v6h-1zM373 132h1v6h-1zM374 132h1v5h-1zM375 132h1v5h-1zM376 132h1v6h-1zM377 132h1v5h-1zM378 130h1v8h-1zM379 132h1v8h-1zM380 132h1v6h-1zM381 132h1v6h-1zM382 132h1v8h-1zM383 132h1v6h-1zM384 132h1v6h-1zM385 132h1v6h-1zM386 132h1v6h-1zM387 132h1v5h-1zM388 132h1v5h-1zM389 132h1v5h-1zM390 133h1v4h-1zM391 132h1v8h-1zM392 133h1v5h-1zM393 131h1v6h-1zM394 129h1v9h-1zM395 132h1v6h-1zM396 132h1v6h-1zM397 132h1v7h-1zM398 132h1v6h-1zM399 133h1v4h-1zM400 131h1v6h-1zM401 132h1v6h-1zM402 132h1v6h-1zM403 131h1v7h-1zM404 133h1v5h-1zM405 132h1v6h-1zM406 132h1v6h-1zM407 132h1v6h-1zM408 222h1v6h-1zM409 223h1v4h-1zM410 223h1v4h-1zM411 223h1v4h-1zM412 223h1v5h-1zM413 220h1v8h-1zM414 222h1v6h-1zM415 222h1v6h-1zM416 219h1v9h-1zM417 222h1v5h-1zM418 223h1v5h-1zM419 221h1v6h-1zM420 220h1v7h-1zM421 222h1v5h-1zM422 223h1v4h-1zM423 222h1v5h-1zM424 222h1v5h-1zM425 223h1v5h-1zM426 223h1v5h-1zM427 223h1v5h-1zM428 222h1v6h-1zM429 222h1v5h-1zM430 223h1v4h-1zM431 223h1v4h-1zM432 222h1v6h-1zM433 222h1v6h-1zM434 222h1v5h-1zM435 222h1v5h-1zM436 222h1v6h-1zM437 223h1v4h-1zM438 223h1v5h-1zM439 223h1v4h-1zM440 222h1v5h-1zM441 222h1v6h-1zM442 223h1v7h-1zM443 222h1v6h-1zM444 219h1v9h-1zM445 222h1v5h-1zM446 222h1v5h-1zM447 222h1v6h-1zM448 222h1v5h-1zM449 222h1v7h-1zM450 222h1v6h-1zM451 222h1v6h-1zM452 223h1v4h-1zM453 221h1v7h-1zM454 222h1v5h-1zM455 222h1v6h-1zM456 222h1v6h-1zM457 223h1v5h-1zM458 222h1v6h-1zM459 222h1v5h-1zM460 222h1v6h-1zM461 222h1v6h-1zM462 222h1v5h-1zM463 223h1v5h-1zM464 222h1v6h-1zM465 222h1v5h-1zM466 223h1v4h-1zM467 222h1v7h-1zM468 222h1v5h-1zM469 222h1v5h-1zM470 222h1v5h-1zM471 223h1v5h-1zM472 223h1v4h-1zM473 223h1v6h-1zM474 222h1v6h-1zM475 223h1v5h-1zM476 222h1v5h-1zM477 222h1v6h-1zM478 223h1v5h-1zM479 223h1v5h-1zM480 222h1v5h-1zM481 221h1v7h-1zM482 219h1v9h-1zM483 220h1v8h-1zM484 223h1v5h-1zM485 221h1v6h-1zM486 220h1v8h-1zM487 223h1v5h-1zM488 221h1v7h-1zM489 223h1v5h-1zM490 220h1v8h-1zM491 222h1v6h-1zM492 222h1v6h-1zM493 221h1v6h-1zM494 223h1v7h-1zM495 222h1v5h-1zM496 222h1v5h-1zM497 222h1v7h-1zM498 222h1v5h-1zM499 223h1v4h-1zM500 222h1v5h-1zM501 223h1v5h-1zM502 222h1v6h-1zM503 222h1v6h-1zM504 222h1v6h-1zM505 222h1v6h-1zM506 222h1v5h-1zM507 222h1v5h-1zM508 222h1v6h-1zM509 222h1v6h-1zM510 222h1v6h-1zM511 223h1v4h-1zM512 222h1v5h-1zM513 221h1v6h-1zM514 222h1v6h-1zM515 222h1v5h-1zM516 222h1v6h-1zM517 222h1v6h-1zM518 222h1v6h-1zM519 222h1v7h-1zM520 222h1v5h-1zM521 222h1v8h-1zM522 223h1v5h-1zM523 223h1v5h-1zM524 222h1v6h-1zM525 222h1v6h-1zM526 223h1v4h-1zM527 223h1v4h-1zM528 222h1v5h-1zM529 222h1v5h-1zM530 222h1v6h-1zM531 221h1v7h-1zM532 222h1v6h-1zM533 223h1v5h-1zM534 223h1v4h-1zM535 130h1v8h-1zM536 130h1v7h-1zM537 130h1v7h-1zM538 131h1v6h-1zM539 130h1v7h-1zM540 130h1v7h-1zM541 132h1v6h-1zM542 132h1v6h-1zM543 132h1v6h-1zM544 133h1v4h-1zM545 133h1v5h-1zM546 131h1v7h-1zM547 132h1v6h-1zM548 132h1v5h-1zM549 133h1v5h-1zM550 133h1v5h-1zM551 132h1v6h-1zM552 133h1v4h-1zM553 133h1v4h-1zM554 133h1v5h-1zM555 132h1v6h-1zM556 133h1v5h-1zM557 132h1v6h-1zM558 133h1v5h-1zM559 132h1v5h-1zM560 132h1v5h-1zM561 132h1v5h-1zM562 132h1v6h-1zM563 132h1v6h-1zM564 132h1v6h-1zM565 132h1v6h-1zM566 132h1v6h-1zM567 133h1v5h-1zM568 133h1v5h-1zM569 132h1v6h-1zM570 132h1v5h-1zM571 132h1v5h-1zM572 132h1v5h-1zM573 132h1v7h-1zM574 132h1v6h-1zM575 132h1v6h-1zM576 132h1v5h-1zM577 132h1v5h-1zM578 133h1v5h-1zM579 132h1v5h-1zM580 132h1v6h-1zM581 132h1v6h-1zM582 132h1v6h-1zM583 132h1v5h-1zM584 133h1v5h-1zM585 132h1v5h-1zM586 130h1v7h-1zM587 133h1v4h-1zM588 133h1v4h-1zM589 133h1v5h-1zM590 133h1v4h-1zM591 133h1v4h-1zM592 133h1v5h-1zM593 133h1v5h-1zM594 133h1v4h-1zM595 133h1v6h-1zM596 132h1v6h-1zM597 133h1v5h-1zM598 133h1v5h-1zM599 132h1v6h-1zM600 131h1v6h-1zM601 133h1v5h-1zM602 132h1v6h-1zM603 132h1v6h-1zM604 130h1v8h-1zM605 133h1v5h-1zM606 132h1v5h-1zM607 133h1v4h-1zM608 221h1v6h-1zM609 223h1v5h-1zM610 223h1v5h-1zM611 223h1v5h-1zM612 222h1v6h-1zM613 222h1v5h-1zM614 222h1v5h-1zM615 223h1v4h-1zM616 223h1v6h-1zM617 221h1v6h-1zM618 223h1v4h-1zM619 222h1v5h-1zM620 222h1v5h-1zM621 222h1v5h-1zM622 222h1v5h-1zM623 222h1v5h-1zM624 220h1v8h-1zM625 223h1v4h-1zM626 222h1v5h-1zM627 222h1v6h-1zM628 222h1v6h-1zM629 220h1v7h-1zM630 223h1v5h-1zM631 223h1v5h-1zM632 222h1v6h-1zM633 222h1v6h-1zM634 223h1v5h-1zM635 222h1v6h-1zM636 220h1v8h-1zM637 223h1v5h-1zM638 219h1v9h-1zM639 222h1v6h-1zM640 222h1v5h-1zM641 222h1v5h-1zM642 223h1v5h-1zM643 223h1v4h-1zM644 221h1v7h-1zM645 221h1v7h-1zM646 222h1v7h-1zM647 223h1v5h-1zM648 221h1v7h-1zM649 222h1v6h-1zM650 223h1v4h-1zM651 223h1v5h-1zM652 223h1v5h-1zM653 222h1v5h-1zM654 222h1v6h-1zM655 223h1v5h-1zM135 133V227h1V133z M208 133V227h1V133zM335 133V227h1V133z M408 133V227h1V133zM535 133V227h1V133z M608 133V227h1V133z" fill="#00ffff"/>
</g>
<polyline points="16.0,123.9 17.0,120.8 18.0,117.9 19.0,113.5 20.0,111.0 21.0,108.2 22.0,104.9 23.0,100.2 24.0,97.9 25.0,94.6 26.0,91.1 27.0,88.8 28.0,84.8 29.0,81.4 30.0,79.3 31.0,75.6 32.0,71.9 33.0,68.9 34.0,66.3 35.0,62.5 36.0,60.7 37.0,58.1 38.0,54.7 39.0,52.8 40.0,50.4 41.0,47.0 42.0,44.7 43.0,41.1 44.0,38.6 45.0,38.1 46.0,34.5 47.0,32.2 48.0,31.5 49.0,29.2 50.0,26.0 51.0,24.5 52.0,22.6 53.0,21.0 54.0,18.9 55.0,18.4 56.0,16.6 57.0,15.5 58.0,13.8 59.0,12.6 60.0,11.4 61.0,12.2 62.0,11.1 63.0,10.0 64.0,8.5 65.0,8.0 66.0,7.6 67.0,7.7 68.0,6.9 69.0,7.3 70.0,7.1 71.0,7.2 72.0,8.3 73.0,8.2 74.0,8.7 75.0,9.0 76.0,10.0 77.0,11.2 78.0,11.0 79.0,11.5 80.0,13.3 81.0,14.2 82.0,16.2 83.0,16.2 84.0,19.1 85.0,18.9 86.0,21.5 87.0,23.0 88.0,24.5 89.0,27.5 90.0,29.1 91.0,30.0 92.0,32.8 93.0,35.2 94.0,36.3 95.0,38.7 96.0,42.1 97.0,44.8 98.0,46.8 99.0,49.3 100.0,52.2 101.0,54.4 102.0,58.4 103.0,61.4 104.0,63.3 105.0,65.3 106.0,69.0 107.0,72.9 108.0,75.0 109.0,77.6 110.0,80.9 111.0,85.1 112.0,88.1 113.0,90.7 114.0,94.6 115.0,98.1 116.0,101.8 117.0,104.8 118.0,107.2 119.0,111.3 120.0,114.8 121.0,118.0 122.0,121.0 123.0,124.0 124.0,127.1 125.0,131.0 126.0,133.8 127.0,137.2 128.0,139.4 129.0,142.2 130.0,145.7 131.0,149.4 132.0,152.5 133.0,154.7 134.0,157.7 135.0,162.1 136.0,163.3 137.0,167.8 138.0,170.3 139.0,172.6 140.0,176.1 141.0,178.1 142.0,179.2 143.0,183.6 144.0,184.9 145.0,188.2 146.0,190.3 147.0,191.1 148.0,193.0 149.0,195.0 150.0,198.4 151.0,200.3 152.0,200.9 153.0,202.4 154.0,204.5 155.0,206.8 156.0,208.1 157.0,209.7 158.0,211.1 159.0,211.8 160.0,212.9 161.0,212.2 162.0,213.0 163.0,215.5 164.0,215.6 165.0,215.5 166.0,215.5 167.0,216.2 168.0,216.5 169.0,216.9 170.0,216.8 171.0,216.2 172.0,215.7 173.0,215.7 174.0,215.1 175.0,214.5 176.0,214.6 177.0,213.3 178.0,213.8 179.0,212.4 180.0,211.2 181.0,210.4 182.0,208.4 183.0,206.7 184.0,205.4 185.0,204.4 186.0,202.9 187.0,201.0 188.0,199.3 189.0,198.5 190.0,195.0 191.0,193.8 192.0,191.6 193.0,189.2 194.0,187.9 195.0,184.5 196.0,181.8 197.0,179.6 198.0,178.7 199.0,174.8 200.0,171.7 201.0,170.7 202.0,167.2 203.0,165.0 204.0,160.9 205.0,158.9 206.0,154.4 207.0,151.8 208.0,149.9 209.0,146.2 210.0,143.6 211.0,139.7 212.0,137.5 213.0,132.7 214.0,130.5 215.0,126.4 216.0,123.2 217.0,121.3 218.0,117.1 219.0,114.6 220.0,110.2 221.0,107.8 222.0,104.9 223.0,101.1 224.0,97.0 225.0,94.7 226.0,92.0 227.0,88.5 228.0,84.6 229.0,81.3 230.0,77.6 231.0,75.9 232.0,71.6 233.0,68.7 234.0,65.3 235.0,62.7 236.0,60.2 237.0,57.6 238.0,54.2 239.0,52.0 240.0,50.0 241.0,46.1 242.0,43.6 243.0,41.9 244.0,40.3 245.0,38.0 246.0,35.1 247.0,31.9 248.0,31.4 249.0,29.6 250.0,27.5 251.0,24.9 252.0,22.9 253.0,21.6 254.0,20.4 255.0,19.4 256.0,17.0 257.0,15.7 258.0,14.1 259.0,13.4 260.0,12.4 261.0,11.0 262.0,10.5 263.0,10.7 264.0,8.7 265.0,8.3 266.0,7.9 267.0,8.7 268.0,7.4 269.0,8.4 270.0,8.6 271.0,8.6 272.0,8.6 273.0,7.7 274.0,8.6 275.0,9.9 276.0,9.4 277.0,10.8 278.0,12.1 279.0,13.2 280.0,13.0 281.0,13.7 282.0,14.7 283.0,16.6 284.0,18.5 285.0,19.4 286.0,22.1 287.0,23.4 288.0,25.1 289.0,27.4 290.0,28.3 291.0,31.0 292.0,32.5 293.0,34.5 294.0,36.4 295.0,40.1 296.0,42.7 297.0,43.4 298.0,47.3 299.0,48.6 300.0,52.0 301.0,54.5 302.0,58.5 303.0,60.3 304.0,63.4 305.0,66.0 306.0,68.8 307.0,71.8 308.0,74.5 309.0,77.4 310.0,81.6 311.0,85.2 312.0,88.2 313.0,90.6 314.0,95.3 315.0,96.7 316.0,100.7 317.0,103.8 318.0,106.7 319.0,111.6 320.0,114.4 321.0,116.5 322.0,119.9 323.0,124.4 324.0,126.8 325.0,129.9 326.0,133.1 327.0,136.4 328.0,140.1 329.0,142.7 330.0,146.4 331.0,148.4 332.0,152.4 333.0,155.5 334.0,158.0 335.0,162.0 336.0,165.0 337.0,167.3 338.0,169.6 339.0,171.8 340.0,175.4 341.0,177.3 342.0,179.6 343.0,182.8 344.0,184.5 345.0,187.7 346.0,190.2 347.0,190.9 348.0,194.2 349.0,195.3 350.0,197.6 351.0,200.2 352.0,202.4 353.0,202.8 354.0,205.3 355.0,205.9 356.0,208.5 357.0,208.3 358.0,210.5 359.0,210.4 360.0,212.4 361.0,213.7 362.0,214.8 363.0,215.3 364.0,215.4 365.0,215.7 366.0,216.5 367.0,216.9 368.0,217.0 369.0,217.3 370.0,217.4 371.0,217.7 372.0,216.8 373.0,217.0 374.0,216.3 375.0,215.1 376.0,215.3 377.0,213.7 378.0,213.9 379.0,213.0 380.0,212.1 381.0,211.0 382.0,209.3 383.0,207.6 384.0,205.8 385.0,205.0 386.0,203.9 387.0,201.2 388.0,199.1 389.0,198.4 390.0,196.8 391.0,193.3 392.0,191.1 393.0,188.9 394.0,187.5 395.0,185.8 396.0,182.2 397.0,180.8 398.0,176.8 399.0,174.5 400.0,172.5 401.0,170.2 402.0,166.9 403.0,164.5 404.0,161.0 405.0,158.1 406.0,155.4 407.0,151.3 408.0,148.7 409.0,145.9 410.0,143.4 411.0,139.3 412.0,136.2 413.0,134.5 414.0,130.6 415.0,126.9 416.0,124.3 417.0,120.9 418.0,117.9 419.0,114.1 420.0,110.9 421.0,106.6 422.0,104.0 423.0,100.6 424.0,97.1 425.0,94.0 426.0,91.9 427.0,87.3 428.0,83.9 429.0,81.2 430.0,77.8 431.0,74.4 432.0,73.1 433.0,69.4 434.0,65.3 435.0,63.4 436.0,59.8 437.0,57.6 438.0,55.8 439.0,53.1 440.0,49.3 441.0,47.5 442.0,44.4 443.0,41.1 444.0,39.3 445.0,37.8 446.0,35.5 447.0,33.2 448.0,31.6 449.0,28.4 450.0,27.1 451.0,25.5 452.0,24.0 453.0,22.2 454.0,20.6 455.0,18.0 456.0,16.7 457.0,15.9 458.0,13.7 459.0,13.0 460.0,12.1 461.0,10.8 462.0,10.0 463.0,10.2 464.0,8.9 465.0,7.9 466.0,8.9 467.0,8.9 468.0,7.3 469.0,8.1 470.0,6.9 471.0,7.3 472.0,7.4 473.0,8.6 474.0,8.9 475.0,9.9 476.0,10.2 477.0,11.1 478.0,12.2 479.0,12.5 480.0,12.8 481.0,13.8 482.0,16.4 483.0,17.6 484.0,18.7 485.0,20.8 486.0,22.1 487.0,22.9 488.0,24.2 489.0,26.6 490.0,29.5 491.0,31.4 492.0,31.8 493.0,33.9 494.0,37.1 495.0,40.3 496.0,42.7 497.0,45.0 498.0,46.0 499.0,48.9 500.0,52.7 501.0,54.8 502.0,57.3 503.0,61.4 504.0,62.4 505.0,66.3 506.0,70.0 507.0,72.7 508.0,76.1 509.0,78.0 510.0,81.7 511.0,85.7 512.0,87.1 513.0,90.9 514.0,95.3 515.0,96.9 516.0,101.4 517.0,104.6 518.0,106.9 519.0,111.6 520.0,114.5 521.0,116.5 522.0,121.5 523.0,124.5 524.0,127.0 525.0,129.3 526.0,134.1 527.0,136.9 528.0,140.4 529.0,142.2 530.0,146.1 531.0,149.9 532.0,152.8 533.0,154.7 534.0,158.0 535.0,161.2 536.0,164.0 537.0,167.9 538.0,170.6 539.0,171.4 540.0,175.3 541.0,177.0 542.0,181.0 543.0,182.8 544.0,185.9 545.0,188.2 546.0,190.5 547.0,191.2 548.0,193.1 549.0,196.5 550.0,197.8 551.0,200.3 552.0,201.4 553.0,203.0 554.0,205.2 555.0,206.0 556.0,207.6 557.0,208.7 558.0,210.5 559.0,210.4 560.0,212.2 561.0,213.4 562.0,214.4 563.0,215.5 564.0,215.1 565.0,216.8 566.0,216.7 567.0,216.3 568.0,216.9 569.0,216.6 570.0,217.2 571.0,215.8 572.0,217.4 573.0,216.0 574.0,214.9 575.0,214.5 576.0,214.4 577.0,213.5 578.0,213.9 579.0,212.0 580.0,212.1 581.0,209.7 582.0,208.6 583.0,208.5 584.0,207.0 585.0,205.6 586.0,202.4 587.0,200.6 588.0,200.1 589.0,197.6 590.0,195.2 591.0,193.1 592.0,191.5 593.0,189.3 594.0,187.7 595.0,186.1 596.0,182.0 597.0,180.8 598.0,177.9 599.0,175.8 600.0,173.4 601.0,170.6 602.0,166.2 603.0,164.6 604.0,161.8 605.0,158.1 606.0,154.4 607.0,152.8 608.0,149.5 609.0,146.7 610.0,143.6 611.0,140.4 612.0,135.8 613.0,134.4 614.0,131.2 615.0,126.7 616.0,124.3 617.0,121.4 618.0,117.1 619.0,113.6 620.0,110.9 621.0,107.9 622.0,103.9 623.0,101.2 624.0,98.5 625.0,94.1 626.0,91.9 627.0,87.2 628.0,84.9 629.0,82.2 630.0,78.2 631.0,74.9 632.0,71.8 633.0,69.0 634.0,66.1 635.0,63.2 636.0,60.0 637.0,57.8 638.0,54.3 639.0,51.7 640.0,49.4 641.0,47.7 642.0,43.9 643.0,41.3 644.0,40.1 645.0,37.4 646.0,34.2 647.0,33.7 648.0,30.1 649.0,28.9 650.0,26.2 651.0,25.5 652.0,22.9 653.0,21.7 654.0,20.4 655.0,18.8 656.0,16.6" fill="none" stroke="#ff2000" stroke-width="2.5" shape-rendering="crispEdges"/>
<g shape-rendering="crispEdges">
<path d="M16 161h1v4h-1zM17 161h1v4h-1zM18 160h1v6h-1zM19 159h1v6h-1zM20 161h1v6h-1zM21 161h1v5h-1zM22 160h1v6h-1zM23 161h1v8h-1zM24 161h1v5h-1zM25 161h1v5h-1zM26 161h1v5h-1zM27 161h1v4h-1zM28 161h1v5h-1zM29 160h1v6h-1zM30 160h1v6h-1zM31 160h1v6h-1zM32 160h1v7h-1zM33 160h1v6h-1zM34 161h1v6h-1zM35 161h1v5h-1zM36 161h1v5h-1zM37 160h1v6h-1zM38 161h1v5h-1zM39 161h1v5h-1zM40 161h1v5h-1zM41 160h1v5h-1zM42 158h1v8h-1zM43 160h1v5h-1zM44 160h1v5h-1zM45 161h1v5h-1zM46 158h1v8h-1zM47 161h1v5h-1zM48 161h1v8h-1zM49 161h1v5h-1zM50 160h1v5h-1zM51 160h1v6h-1zM52 160h1v6h-1zM53 161h1v5h-1zM54 161h1v4h-1zM55 160h1v6h-1zM56 160h1v6h-1zM57 160h1v5h-1zM58 160h1v5h-1zM59 159h1v7h-1zM60 161h1v5h-1zM61 161h1v5h-1zM62 160h1v6h-1zM63 161h1v7h-1zM64 160h1v8h-1zM65 160h1v6h-1zM66 161h1v5h-1zM67 161h1v5h-1zM68 161h1v5h-1zM69 161h1v4h-1zM70 161h1v4h-1zM71 161h1v5h-1zM72 161h1v4h-1zM73 161h1v4h-1zM74 161h1v6h-1zM75 158h1v8h-1zM76 161h1v4h-1zM77 158h1v8h-1zM78 159h1v7h-1zM79 161h1v4h-1zM80 161h1v6h-1zM81 160h1v6h-1zM82 161h1v5h-1zM83 161h1v4h-1zM84 161h1v5h-1zM85 161h1v5h-1zM86 161h1v4h-1zM87 160h1v6h-1zM88 158h1v8h-1zM89 161h1v5h-1zM90 161h1v5h-1zM91 161h1v4h-1zM92 161h1v4h-1zM93 159h1v6h-1zM94 160h1v5h-1zM95 159h1v6h-1zM96 161h1v4h-1zM97 161h1v4h-1zM98 160h1v5h-1zM99 161h1v5h-1zM100 159h1v7h-1zM101 161h1v5h-1zM102 161h1v4h-1zM103 161h1v4h-1zM104 161h1v4h-1zM105 161h1v4h-1zM106 161h1v5h-1zM107 160h1v8h-1zM108 161h1v5h-1zM109 160h1v6h-1zM110 160h1v9h-1zM111 161h1v5h-1zM112 160h1v6h-1zM113 160h1v5h-1zM114 161h1v4h-1zM115 161h1v4h-1zM116 161h1v5h-1zM117 161h1v4h-1zM118 161h1v4h-1zM119 160h1v5h-1zM120 161h1v4h-1zM121 161h1v5h-1zM122 161h1v8h-1zM123 161h1v5h-1zM124 161h1v5h-1zM125 161h1v5h-1zM126 161h1v5h-1zM127 161h1v5h-1zM128 161h1v7h-1zM129 161h1v5h-1zM130 159h1v7h-1zM131 161h1v5h-1zM132 161h1v4h-1zM133 161h1v4h-1zM134 160h1v5h-1zM135 144h1v7h-1zM136 143h1v7h-1zM137 144h1v5h-1zM138 144h1v5h-1zM139 144h1v9h-1zM140 145h1v5h-1zM141 145h1v4h-1zM142 145h1v4h-1zM143 144h1v5h-1zM144 144h1v6h-1zM145 144h1v6h-1zM146 142h1v8h-1zM147 145h1v5h-1zM148 144h1v8h-1zM149 143h1v7h-1zM150 143h1v7h-1zM151 145h1v5h-1zM152 145h1v4h-1zM153 141h1v9h-1zM154 145h1v5h-1zM155 142h1v8h-1zM156 145h1v5h-1zM157 142h1v8h-1zM158 144h1v6h-1zM159 145h1v4h-1zM160 145h1v4h-1zM161 142h1v8h-1zM162 145h1v5h-1zM163 145h1v5h-1zM164 142h1v8h-1zM165 142h1v8h-1zM166 143h1v7h-1zM167 144h1v6h-1zM168 145h1v4h-1zM169 145h1v4h-1zM170 145h1v5h-1zM171 145h1v4h-1zM172 144h1v6h-1zM173 145h1v5h-1zM174 145h1v5h-1zM175 145h1v4h-1zM176 145h1v5h-1zM177 144h1v6h-1zM178 145h1v5h-1zM179 145h1v5h-1zM180 145h1v8h-1zM181 145h1v5h-1zM182 144h1v6h-1zM183 145h1v5h-1zM184 145h1v4h-1zM185 144h1v5h-1zM186 145h1v4h-1zM187 145h1v4h-1zM188 145h1v4h-1zM189 145h1v5h-1zM190 144h1v6h-1zM191 144h1v6h-1zM192 144h1v6h-1zM193 145h1v6h-1zM194 145h1v5h-1zM195 145h1v5h-1zM196 145h1v5h-1zM197 145h1v6h-1zM198 145h1v5h-1zM199 145h1v5h-1zM200 142h1v7h-1zM201 145h1v4h-1zM202 145h1v5h-1zM203 144h1v6h-1zM204 145h1v4h-1zM205 141h1v9h-1zM206 145h1v4h-1zM207 145h1v4h-1zM208 161h1v4h-1zM209 161h1v4h-1zM210 161h1v4h-1zM211 161h1v4h-1zM212 161h1v7h-1zM213 161h1v4h-1zM214 161h1v5h-1zM215 160h1v6h-1zM216 161h1v5h-1zM217 161h1v4h-1zM218 161h1v4h-1zM219 159h1v6h-1zM220 161h1v5h-1zM221 160h1v6h-1zM222 160h1v6h-1zM223 160h1v6h-1zM224 161h1v6h-1zM225 161h1v5h-1zM226 160h1v5h-1zM227 160h1v5h-1zM228 160h1v5h-1zM229 160h1v6h-1zM230 159h1v7h-1zM231 160h1v5h-1zM232 161h1v5h-1zM233 161h1v5h-1zM234 158h1v8h-1zM235 158h1v8h-1zM236 160h1v6h-1zM237 160h1v5h-1zM238 161h1v4h-1zM239 160h1v5h-1zM240 160h1v5h-1zM241 161h1v5h-1zM242 161h1v4h-1zM243 161h1v7h-1zM244 160h1v6h-1zM245 161h1v5h-1zM246 161h1v5h-1zM247 161h1v5h-1zM248 158h1v7h-1zM249 160h1v5h-1zM250 160h1v6h-1zM251 161h1v5h-1zM252 161h1v5h-1zM253 161h1v5h-1zM254 160h1v6h-1zM255 160h1v6h-1zM256 161h1v5h-1zM257 159h1v6h-1zM258 161h1v4h-1zM259 160h1v6h-1zM260 160h1v6h-1zM261 161h1v5h-1zM262 161h1v7h-1zM263 159h1v7h-1zM264 160h1v6h-1zM265 160h1v6h-1zM266 160h1v5h-1zM267 161h1v4h-1zM268 161h1v4h-1zM269 159h1v7h-1zM270 161h1v5h-1zM271 161h1v5h-1zM272 161h1v5h-1zM273 161h1v5h-1zM274 161h1v5h-1zM275 161h1v5h-1zM276 160h1v5h-1zM277 161h1v4h-1zM278 161h1v4h-1zM279 160h1v6h-1zM280 160h1v5h-1zM281 160h1v5h-1zM282 161h1v4h-1zM283 160h1v5h-1zM284 160h1v5h-1zM285 160h1v6h-1zM286 160h1v6h-1zM287 160h1v6h-1zM288 160h1v6h-1zM289 160h1v5h-1zM290 161h1v6h-1zM291 161h1v5h-1zM292 161h1v5h-1zM293 157h1v8h-1zM294 160h1v6h-1zM295 161h1v4h-1zM296 161h1v5h-1zM297 161h1v8h-1zM298 161h1v7h-1zM299 161h1v5h-1zM300 161h1v5h-1zM301 161h1v5h-1zM302 161h1v5h-1zM303 160h1v5h-1zM304 161h1v5h-1zM305 161h1v5h-1zM306 161h1v4h-1zM307 161h1v5h-1zM308 161h1v4h-1zM309 160h1v8h-1zM310 160h1v5h-1zM311 161h1v5h-1zM312 161h1v5h-1zM313 161h1v5h-1zM314 161h1v5h-1zM315 161h1v5h-1zM316 161h1v4h-1zM317 161h1v4h-1zM318 160h1v5h-1zM319 160h1v7h-1zM320 160h1v6h-1zM321 158h1v8h-1zM322 160h1v6h-1zM323 161h1v7h-1zM324 158h1v8h-1zM325 161h1v5h-1zM326 160h1v8h-1zM327 161h1v6h-1zM328 159h1v6h-1zM329 160h1v6h-1zM330 161h1v4h-1zM331 161h1v4h-1zM332 161h1v4h-1zM333 161h1v4h-1zM334 161h1v4h-1zM335 145h1v4h-1zM336 145h1v4h-1zM337 143h1v6h-1zM338 145h1v7h-1zM339 145h1v5h-1zM340 145h1v5h-1zM341 144h1v5h-1zM342 145h1v4h-1zM343 144h1v5h-1zM344 144h1v6h-1zM345 144h1v6h-1zM346 144h1v5h-1zM347 145h1v4h-1zM348 144h1v5h-1zM349 145h1v5h-1zM350 144h1v5h-1zM351 144h1v5h-1zM352 144h1v5h-1zM353 142h1v7h-1zM354 145h1v4h-1zM355 145h1v4h-1zM356 143h1v6h-1zM357 145h1v4h-1zM358 145h1v4h-1zM359 145h1v4h-1zM360 145h1v8h-1zM361 145h1v4h-1zM362 142h1v7h-1zM363 145h1v5h-1zM364 145h1v5h-1zM365 145h1v5h-1zM366 145h1v5h-1zM367 144h1v6h-1zM368 144h1v6h-1zM369 145h1v4h-1zM370 145h1v5h-1zM371 145h1v5h-1zM372 145h1v5h-1zM373 145h1v5h-1zM374 145h1v5h-1zM375 145h1v4h-1zM376 145h1v5h-1zM377 144h1v6h-1zM378 143h1v7h-1zM379 144h1v6h-1zM380 144h1v6h-1zM381 145h1v5h-1zM382 145h1v5h-1zM383 145h1v5h-1zM384 145h1v4h-1zM385 145h1v4h-1zM386 145h1v7h-1zM387 144h1v5h-1zM388 142h1v8h-1zM389 144h1v6h-1zM390 145h1v5h-1zM391 144h1v5h-1zM392 141h1v8h-1zM393 145h1v4h-1zM394 145h1v5h-1zM395 145h1v4h-1zM396 145h1v4h-1zM397 145h1v4h-1zM398 145h1v5h-1zM399 144h1v6h-1zM400 144h1v6h-1zM401 145h1v5h-1zM402 145h1v4h-1zM403 144h1v5h-1zM404 145h1v8h-1zM405 145h1v5h-1zM406 145h1v4h-1zM407 145h1v4h-1zM408 161h1v5h-1zM409 160h1v6h-1zM410 161h1v5h-1zM411 161h1v5h-1zM412 159h1v7h-1zM413 160h1v6h-1zM414 161h1v5h-1zM415 161h1v7h-1zM416 160h1v6h-1zM417 161h1v5h-1zM418 161h1v5h-1zM419 161h1v5h-1zM420 161h1v4h-1zM421 161h1v4h-1zM422 161h1v5h-1zM423 161h1v4h-1zM424 161h1v5h-1zM425 161h1v4h-1zM426 161h1v5h-1zM427 161h1v7h-1zM428 161h1v5h-1zM429 161h1v5h-1zM430 161h1v4h-1zM431 159h1v7h-1zM432 161h1v8h-1zM433 160h1v5h-1zM434 161h1v4h-1zM435 161h1v4h-1zM436 161h1v5h-1zM437 161h1v4h-1zM438 161h1v7h-1zM439 161h1v4h-1zM440 161h1v4h-1zM441 161h1v4h-1zM442 157h1v9h-1zM443 160h1v6h-1zM444 161h1v5h-1zM445 161h1v5h-1zM446 160h1v6h-1zM447 161h1v5h-1zM448 161h1v4h-1zM449 160h1v5h-1zM450 160h1v6h-1zM451 159h1v7h-1zM452 159h1v7h-1zM453 159h1v6h-1zM454 161h1v5h-1zM455 161h1v5h-1zM456 161h1v5h-1zM457 161h1v5h-1zM458 159h1v7h-1zM459 161h1v5h-1zM460 160h1v5h-1zM461 161h1v5h-1zM462 160h1v6h-1zM463 161h1v6h-1zM464 161h1v5h-1zM465 161h1v5h-1zM466 161h1v4h-1zM467 161h1v5h-1zM468 161h1v8h-1zM469 161h1v5h-1zM470 161h1v5h-1zM471 159h1v7h-1zM472 159h1v7h-1zM473 161h1v5h-1zM474 160h1v8h-1zM475 161h1v4h-1zM476 160h1v5h-1zM477 157h1v8h-1zM478 160h1v6h-1zM479 160h1v6h-1zM480 160h1v6h-1zM481 160h1v9h-1zM482 161h1v5h-1zM483 161h1v5h-1zM484 159h1v7h-1zM485 159h1v6h-1zM486 159h1v6h-1zM487 160h1v5h-1zM488 160h1v6h-1zM489 160h1v5h-1zM490 161h1v4h-1zM491 158h1v7h-1zM492 161h1v5h-1zM493 161h1v5h-1zM494 160h1v5h-1zM495 161h1v5h-1zM496 161h1v4h-1zM497 159h1v7h-1zM498 161h1v7h-1zM499 161h1v4h-1zM500 161h1v4h-1zM501 161h1v4h-1zM502 161h1v4h-1zM503 161h1v4h-1zM504 160h1v8h-1zM505 161h1v5h-1zM506 161h1v5h-1zM507 160h1v5h-1zM508 161h1v4h-1zM509 160h1v6h-1zM510 160h1v6h-1zM511 160h1v5h-1zM512 160h1v5h-1zM513 160h1v5h-1zM514 161h1v8h-1zM515 161h1v5h-1zM516 160h1v5h-1zM517 161h1v7h-1zM518 161h1v6h-1zM519 161h1v5h-1zM520 161h1v7h-1zM521 161h1v4h-1zM522 161h1v4h-1zM523 160h1v5h-1zM524 160h1v5h-1zM525 161h1v4h-1zM526 160h1v6h-1zM527 160h1v6h-1zM528 161h1v5h-1zM529 157h1v8h-1zM530 161h1v4h-1zM531 161h1v4h-1zM532 161h1v5h-1zM533 160h1v6h-1zM534 160h1v6h-1zM535 145h1v5h-1zM536 145h1v5h-1zM537 145h1v4h-1zM538 145h1v5h-1zM539 144h1v6h-1zM540 145h1v4h-1zM541 145h1v5h-1zM542 145h1v8h-1zM543 144h1v6h-1zM544 144h1v6h-1zM545 144h1v6h-1zM546 144h1v6h-1zM547 144h1v5h-1zM548 145h1v5h-1zM549 144h1v6h-1zM550 141h1v9h-1zM551 145h1v5h-1zM552 144h1v8h-1zM553 144h1v6h-1zM554 145h1v5h-1zM555 145h1v5h-1zM556 145h1v4h-1zM557 143h1v6h-1zM558 145h1v4h-1zM559 141h1v9h-1zM560 144h1v5h-1zM561 143h1v7h-1zM562 144h1v5h-1zM563 144h1v6h-1zM564 145h1v5h-1zM565 145h1v5h-1zM566 145h1v5h-1zM567 144h1v6h-1zM568 145h1v5h-1zM569 145h1v4h-1zM570 145h1v4h-1zM571 145h1v4h-1zM572 145h1v4h-1zM573 145h1v5h-1zM574 143h1v6h-1zM575 144h1v5h-1zM576 145h1v4h-1zM577 145h1v4h-1zM578 145h1v4h-1zM579 143h1v6h-1zM580 145h1v5h-1zM581 145h1v4h-1zM582 143h1v7h-1zM583 145h1v4h-1zM584 145h1v8h-1zM585 144h1v5h-1zM586 145h1v4h-1zM587 145h1v4h-1zM588 144h1v7h-1zM589 145h1v4h-1zM590 145h1v4h-1zM591 143h1v7h-1zM592 144h1v6h-1zM593 144h1v6h-1zM594 144h1v6h-1zM595 144h1v6h-1zM596 144h1v6h-1zM597 144h1v5h-1zM598 144h1v5h-1zM599 145h1v4h-1zM600 144h1v5h-1zM601 145h1v5h-1zM602 145h1v6h-1zM603 145h1v5h-1zM604 145h1v5h-1zM605 144h1v8h-1zM606 144h1v6h-1zM607 144h1v6h-1zM608 161h1v5h-1zM609 161h1v5h-1zM610 161h1v8h-1zM611 161h1v5h-1zM612 160h1v5h-1zM613 160h1v6h-1zM614 161h1v6h-1zM615 160h1v6h-1zM616 160h1v6h-1zM617 160h1v6h-1zM618 159h1v6h-1zM619 160h1v6h-1zM620 161h1v5h-1zM621 161h1v5h-1zM622 160h1v6h-1zM623 161h1v4h-1zM624 161h1v5h-1zM625 160h1v5h-1zM626 160h1v5h-1zM627 160h1v8h-1zM628 161h1v4h-1zM629 161h1v5h-1zM630 161h1v5h-1zM631 161h1v5h-1zM632 161h1v4h-1zM633 157h1v8h-1zM634 160h1v5h-1zM635 160h1v5h-1zM636 161h1v5h-1zM637 160h1v8h-1zM638 160h1v6h-1zM639 161h1v5h-1zM640 161h1v5h-1zM641 160h1v6h-1zM642 159h1v7h-1zM643 161h1v5h-1zM644 161h1v4h-1zM645 161h1v4h-1zM646 161h1v5h-1zM647 161h1v5h-1zM648 160h1v5h-1zM649 159h1v6h-1zM650 158h1v8h-1zM651 161h1v8h-1zM652 161h1v4h-1zM653 160h1v5h-1zM654 161h1v4h-1zM655 161h1v5h-1zM135 145V165h1V145z M208 145V165h1V145zM335 145V165h1V145z M408 145V165h1V145zM535 145V165h1V145z M608 145V165h1V145z" fill="#00ff00"/>
</g>
</g>
<!-- trigger time label -->
<path d="M300.5 28.5H369.5V41.5L366.5 44.5H340.5L335 51L329.5 44.5H303.5L300.5 41.5Z" fill="#3c6cf0" stroke="#a8c8ff" stroke-width="1"/>
<path d="M453 456.2H459.8L465 472.3H471" fill="none" stroke="#3a78ff" stroke-width="2.6"/><path d="M453 456.2H459.8L465 472.3H471" fill="none" stroke="#b8f0ff" stroke-width="1.3"/>
<!-- right trigger level marker -->
<path d="M643 136.5L656 129V144Z" fill="#ffff00"/>
<!-- left channel markers -->
<path d="M0 234H9L15 240V243L9 249H0Z" fill="#ff2000"/>
<path d="M0 231H9L15 237V240L9 246H0Z" fill="#00ff00"/>
<text x="2" y="244" font-family="Liberation Sans" font-weight="bold" font-size="12" fill="#3838ff">4</text>
</svg>
<svg width="656" height="28" style="position:absolute;left:0;top:0"><path d="M17 7h3v14h-3z M25 7h3.2v14h-3.2z M20 11h5v4h-5z M31 10h11.5v2.5h-11.5z M39.7 10h2.8v11h-2.8z M31 13.6h11v3h-11z M31 13.6h3.2v7.4h-3.2z M31 19.2h11v1.8h-11z M43 10h13.1v2.4h-13.1z M43 10h2.5v11h-2.5z M52.8 10h3.3v11h-3.3z M56.6 10h9.7v2.9h-9.7z M59.8 7h3.4v14h-3.4z M59.8 18.3h9v2.7h-9z M69.2 10h11.6v2.7h-11.6z M77.8 10h3v5h-3z M69.2 13.7h11.6v3.7h-11.6z M69.2 10h3v11h-3z M69.2 18.5h14.5v2.5h-14.5z M83.7 7h3.1v14h-3.1z M86.8 13.6L92.8 9.8H95.2L88.3 15.8L95.2 21H92.3L86.8 16.6Z" fill="#ffff00" shape-rendering="crispEdges"/><rect x="115.5" y="3.5" width="22" height="20" fill="#000" stroke="#a8a8a8" stroke-width="1.3"/><polyline points="116.50,10.07 117.00,9.18 117.50,8.26 118.00,7.40 118.50,6.68 119.00,6.17 119.50,5.92 120.00,5.95 120.50,6.26 121.00,6.81 121.50,7.56 122.00,8.44 122.50,9.36 123.00,10.24 123.50,10.99 124.00,11.54 124.50,11.85 125.00,11.88 125.50,11.62 126.00,11.12 126.50,10.40 127.00,9.54 127.50,8.62 128.00,7.73 128.50,6.95 129.00,6.35 129.50,5.99 130.00,5.91 130.50,6.10 131.00,6.56 131.50,7.24 132.00,8.08 132.50,8.99 133.00,9.90 133.50,10.71 134.00,11.35 134.50,11.76 135.00,11.90 135.50,11.76 136.00,11.35 136.50,10.71 137.00,9.90" fill="none" stroke="#ffff00" stroke-width="2.2"/><polyline points="116.50,18.87 117.00,17.98 117.50,17.06 118.00,16.20 118.50,15.48 119.00,14.97 119.50,14.72 120.00,14.75 120.50,15.06 121.00,15.61 121.50,16.36 122.00,17.24 122.50,18.16 123.00,19.04 123.50,19.79 124.00,20.34 124.50,20.65 125.00,20.68 125.50,20.42 126.00,19.92 126.50,19.20 127.00,18.34 127.50,17.42 128.00,16.53 128.50,15.75 129.00,15.15 129.50,14.79 130.00,14.71 130.50,14.90 131.00,15.36 131.50,16.04 132.00,16.88 132.50,17.79 133.00,18.70 133.50,19.51 134.00,20.15 134.50,20.56 135.00,20.70 135.50,20.56 136.00,20.15 136.50,19.51 137.00,18.70" fill="none" stroke="#00ffff" stroke-width="2.2"/><rect x="140.5" y="3.5" width="22" height="20" fill="#000" stroke="#a8a8a8" stroke-width="1.3"/><line x1="144.6" y1="20.2" x2="158.8" y2="6.2" stroke="#00ff00" stroke-width="2.3" stroke-linecap="round"/><rect x="165.5" y="3.5" width="22" height="20" fill="#000" stroke="#a8a8a8" stroke-width="1.3"/><path d="M172.5 7.5C173.5 5 180 4.5 183 6.5C185.5 8.5 185.5 13 183.5 14.5L181 15.5C180.5 18.5 180 21.5 177 21.8C173 22 169 22 167.5 20C166.5 17 167 14 170 13.2L172.5 12.5C172 11 172 9 172.5 7.5Z" fill="#6a6a6a"/><path d="M175 7C176.5 5.8 180.5 6 181.5 8C182.5 10 182 13 180 14C178.5 15 179 19 176.5 20.5C174 21 171 20.5 170 18.5C169.5 16.5 171.5 15 174 14.5C175.5 13 174 9 175 7Z" fill="#a4a4a4"/><path d="M177 8v6M179.5 8.5v5M172 16v4M175 15v5M182 9v4" stroke="#c8c8c8" stroke-width="0.8" opacity="0.7"/><path d="M193 24.5Q191 24 191 22V5.5Q191 2.5 194 2.5H233" fill="none" stroke="#2c2c2c" stroke-width="1.3"/><path d="M241.5 21.8H246V5.6H256V21.8H261.8" fill="none" stroke="#c8ffff" stroke-width="2.1"/><path d="M248.3 2.8V9M250.8 2.8V9M253.3 2.8V9M258.5 18V23.8M261 18V23.8M243.6 16.8V23.8M241.8 20v3.5" stroke="#c8ffff" stroke-width="1.15"/><rect x="265.5" y="3.5" width="21" height="20" fill="none" stroke="#aca4ac" stroke-width="1.2"/><text x="270.3" y="20" font-family="Liberation Sans" font-weight="bold" font-size="17" fill="#ff9ee0">a</text><path d="M290 14.2L292 12.3H306v3.7H292Z M293 15h2.6v4h-2.6z M297.2 15h2.6v4h-2.6z M301.4 15h2.6v4h-2.6z" fill="#3e433e" shape-rendering="crispEdges"/><path d="M309.5 9C312 9 313.8 11.5 313.8 15C313.8 18.5 312 21 309.5 21C307 21 305.2 18.5 305.2 15C305.2 11.5 307 9 309.5 9Z M308.6 12.2V17.8H310.4V12.2Z" fill="#3e433e" fill-rule="evenodd"/><path d="M316 3.5H335.5V22.5H319L316 19.5Z" fill="none" stroke="#9ad8e0" stroke-width="1.4"/><path d="M317.3 5V19.5L319.5 21.3H334.2V5" fill="none" stroke="#6a50e0" stroke-width="1"/><path d="M319.5 3.5V12.5H332.5V3.5" fill="none" stroke="#c0e8f0" stroke-width="1.2"/><rect x="321.5" y="15.5" width="10" height="6.5" fill="#c8ffff"/><rect x="322.5" y="16.5" width="2" height="4.5" fill="#3020b0"/><rect x="320.5" y="5" width="1.5" height="6" fill="#3020b0"/><path d="M345.5 3.5H357.5V13.5H345.5Z M341.5 13.5H362V23.5H341.5Z" fill="none" stroke="#3c413c" stroke-width="1.8"/><path d="M348 6.5h7v1h-7z M348 9h7v1.6h-7z M348 11.5h7v1h-7z M344 17h16v2.6h-16z" fill="#3e433e"/><rect x="366" y="1" width="1" height="26" fill="#000"/><rect x="367" y="1" width="1" height="26" fill="#9a9a9a"/><rect x="393.5" y="3.5" width="113" height="21" fill="#000" stroke="#6868a8" stroke-width="1"/><polyline points="395.00,13.50 395.50,10.29 396.00,8.58 396.50,9.17 397.00,11.79 397.50,15.21 398.00,17.83 398.50,18.42 399.00,16.71 399.50,13.50 400.00,10.29 400.50,8.58 401.00,9.17 401.50,11.79 402.00,15.21 402.50,17.83 403.00,18.42 403.50,16.71 404.00,13.50" fill="none" stroke="#0a5a60" stroke-width="1"/><polyline points="496.00,13.50 496.50,10.29 497.00,8.58 497.50,9.17 498.00,11.79 498.50,15.21 499.00,17.83 499.50,18.42 500.00,16.71 500.50,13.50 501.00,10.29 501.50,8.58 502.00,9.17 502.50,11.79 503.00,15.21 503.50,17.83 504.00,18.42 504.50,16.71 505.00,13.50 505.50,10.29 506.00,8.58" fill="none" stroke="#0a5a60" stroke-width="1"/><rect x="405" y="4" width="89" height="19" fill="#000" stroke="#ff6010" stroke-width="2"/><polyline points="407.00,17.46 407.50,19.14 408.00,19.88 408.50,19.55 409.00,18.21 409.50,16.07 410.00,13.48 410.50,10.87 411.00,8.64 411.50,7.18 412.00,6.70 412.50,7.30 413.00,8.86 413.50,11.15 414.00,13.78 414.50,16.34 415.00,18.40 415.50,19.64 416.00,19.85 416.50,19.00 417.00,17.22 417.50,14.81 418.00,12.15 418.50,9.68 419.00,7.80 419.50,6.81 420.00,6.87 420.50,7.97 421.00,9.94 421.50,12.45 422.00,15.10 422.50,17.46 423.00,19.14 423.50,19.88 424.00,19.55 424.50,18.21 425.00,16.07 425.50,13.48 426.00,10.87 426.50,8.64 427.00,7.18 427.50,6.70 428.00,7.30 428.50,8.86 429.00,11.15 429.50,13.78 430.00,16.34 430.50,18.40 431.00,19.64 431.50,19.85 432.00,19.00 432.50,17.22 433.00,14.81 433.50,12.15 434.00,9.68 434.50,7.80 435.00,6.81 435.50,6.87 436.00,7.97 436.50,9.94 437.00,12.45 437.50,15.10 438.00,17.46 438.50,19.14 439.00,19.88 439.50,19.55 440.00,18.21 440.50,16.07 441.00,13.48 441.50,10.87 442.00,8.64 442.50,7.18 443.00,6.70 443.50,7.30 444.00,8.86 444.50,11.15 445.00,13.78 445.50,16.34 446.00,18.40 446.50,19.64 447.00,19.85 447.50,19.00 448.00,17.22 448.50,14.81 449.00,12.15 449.50,9.68 450.00,7.80 450.50,6.81 451.00,6.87 451.50,7.97 452.00,9.94 452.50,12.45 453.00,15.10 453.50,17.46 454.00,19.14 454.50,19.88 455.00,19.55 455.50,18.21 456.00,16.07 456.50,13.48 457.00,10.87 457.50,8.64 458.00,7.18 458.50,6.70 459.00,7.30 459.50,8.86 460.00,11.15 460.50,13.78 461.00,16.34 461.50,18.40 462.00,19.64 462.50,19.85 463.00,19.00 463.50,17.22 464.00,14.81 464.50,12.15 465.00,9.68 465.50,7.80 466.00,6.81 466.50,6.87 467.00,7.97 467.50,9.94 468.00,12.45 468.50,15.10 469.00,17.46 469.50,19.14 470.00,19.88 470.50,19.55 471.00,18.21 471.50,16.07 472.00,13.48 472.50,10.87 473.00,8.64 473.50,7.18 474.00,6.70 474.50,7.30 475.00,8.86 475.50,11.15 476.00,13.78 476.50,16.34 477.00,18.40 477.50,19.64 478.00,19.85 478.50,19.00 479.00,17.22 479.50,14.81 480.00,12.15 480.50,9.68 481.00,7.80 481.50,6.81 482.00,6.87 482.50,7.97 483.00,9.94 483.50,12.45 484.00,15.10 484.50,17.46 485.00,19.14 485.50,19.88 486.00,19.55 486.50,18.21 487.00,16.07 487.50,13.48 488.00,10.87 488.50,8.64 489.00,7.18 489.50,6.70 490.00,7.30 490.50,8.86 491.00,11.15 491.50,13.78 492.00,16.34" fill="none" stroke="#00e8ff" stroke-width="1.8"/><rect x="521.5" y="3.5" width="21" height="21" fill="#000" stroke="#a8a8a8" stroke-width="1.2"/><text x="531.5" y="20.8" text-anchor="middle" font-family="Liberation Sans" font-weight="bold" font-size="18.5" fill="#c8ffff">W</text><rect x="548" y="4" width="98" height="21" rx="10" fill="#000"/></svg>
<div class="a" style="left:548px;top:3px;width:98px;line-height:22px;text-align:center;color:#fff;font-size:17.5px;letter-spacing:-0.2px;-webkit-text-stroke:0.2px #000">20.0ms</div>
<div class="a" style="left:657px;top:0;width:143px;height:480px;background:#767676"></div>
<div class="a" style="left:657px;top:0;width:143px;height:1px;background:#b0b0b0"></div>
<div class="a" style="left:657px;top:1px;width:143px;height:27px;background:#404640"></div>
<div class="a" style="left:678.5px;top:1px;font-size:21.5px;line-height:26px;letter-spacing:-0.2px;color:#fff">UTILITY</div>
<svg width="22" height="22" style="position:absolute;left:777px;top:3px"><rect width="21.5" height="21" fill="#fa3a14"/><path d="M4.5 3.2L17 17.8M17 3.2L4.5 17.8" stroke="#fff" stroke-width="2.6"/></svg>
<div class="btn" style="top:64px;height:40px"></div>
<div class="btn" style="top:145px;height:40px"></div>
<div class="btn" style="top:221px;height:40px"></div>
<div class="btn" style="top:305px;height:40px"></div>
<div class="btn" style="left:678px;width:98px;top:448px;height:23px;border-radius:6px"></div>
<div class="bt" style="left:698.5px;top:68px;letter-spacing:0.3px">System</div>
<div class="bt" style="left:700.5px;top:86.5px;letter-spacing:0.9px">Status</div>
<div class="bt" style="left:699px;top:149.5px;letter-spacing:0.4px">Update</div>
<div class="bt" style="left:691.4px;top:167.2px;letter-spacing:0.33px">Firmware</div>
<div class="bt" style="left:708.4px;top:225.4px;letter-spacing:-0.2px">Save</div>
<div class="bt" style="left:690px;top:243.2px;letter-spacing:-0.11px">Waveform</div>
<div class="bt" style="left:681.3px;top:317.2px;letter-spacing:0.51px">Do Self Cal</div>
<div class="bt" style="left:691.5px;top:451.2px;letter-spacing:0.5px">Page 1/4</div>
<div class="a" style="left:15px;top:456px;font-size:16px;letter-spacing:-0.6px;color:#ffff00;-webkit-text-stroke:0.2px #555753">CH1</div>
<div class="pill" style="left:48px;top:453px;width:62px;height:22px"></div>
<div class="a" style="left:48px;top:458px;width:62px;text-align:center;font-size:16px;color:#ffff00;-webkit-text-stroke:0.2px #000">1.00V</div>
<div class="a" style="left:115px;top:456px;font-size:16px;letter-spacing:-0.6px;color:#00ffff;-webkit-text-stroke:0.2px #555753">CH2</div>
<div class="pill" style="left:148px;top:453px;width:62px;height:22px"></div>
<div class="a" style="left:148px;top:458px;width:62px;text-align:center;font-size:16px;color:#00ffff;-webkit-text-stroke:0.2px #000">1.00V</div>
<div class="a" style="left:215px;top:456px;font-size:16px;letter-spacing:-0.6px;color:#ff2000;-webkit-text-stroke:0.2px #555753">CH3</div>
<div class="pill" style="left:248px;top:453px;width:62px;height:22px"></div>
<div class="a" style="left:248px;top:458px;width:62px;text-align:center;font-size:16px;color:#ff2000;-webkit-text-stroke:0.2px #000">1.00V</div>
<div class="a" style="left:315px;top:456px;font-size:16px;letter-spacing:-0.6px;color:#00ff00;-webkit-text-stroke:0.2px #555753">CH4</div>
<div class="pill" style="left:348px;top:453px;width:62px;height:22px"></div>
<div class="a" style="left:348px;top:458px;width:62px;text-align:center;font-size:16px;color:#00ff00;-webkit-text-stroke:0.2px #000">1.00V</div>
<div class="a" style="left:417px;top:456px;font-size:16px;letter-spacing:-0.6px;color:#ffff00;-webkit-text-stroke:0.2px #555753">CH1</div>
<div class="pill" style="left:473px;top:453px;width:70px;height:22px"></div>
<div class="a" style="left:473px;top:456px;width:70px;text-align:center;font-size:16px;color:#ffff00;-webkit-text-stroke:0.2px #000">2.04V</div>
<div class="pill" style="left:550px;top:453px;width:100px;height:22px"></div>
<div class="a" style="left:550px;top:456px;width:100px;text-align:center;font-size:16px;color:#ffff00;-webkit-text-stroke:0.2px #000">10.0000Hz</div>
<div class="a" style="left:300px;top:29px;width:70px;text-align:center;font-size:16px;color:#fff;-webkit-text-stroke:0.3px #3c6cf0">0.000s</div>
</body></html>
